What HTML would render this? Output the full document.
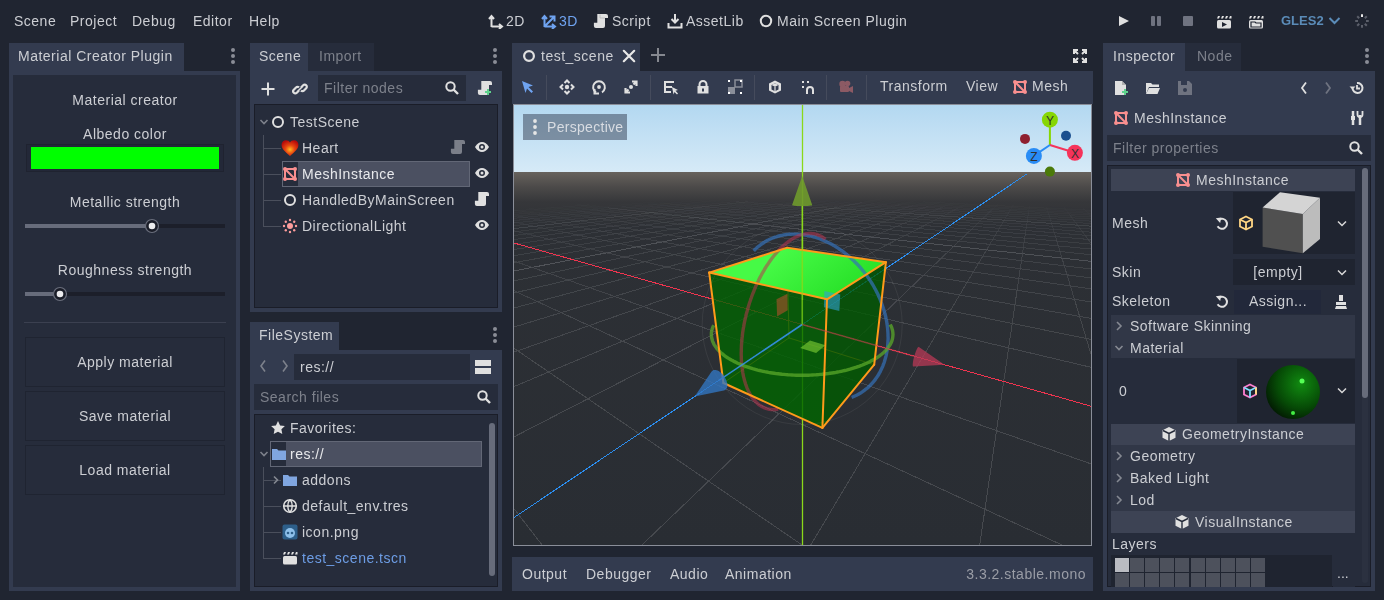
<!DOCTYPE html>
<html><head><meta charset="utf-8"><style>
html,body{margin:0;padding:0;}
body{width:1384px;height:600px;background:#202531;position:relative;overflow:hidden;font-family:"Liberation Sans",sans-serif;font-size:14px;}
body>div,body>span,body>svg{position:absolute;}
.t{position:absolute;white-space:pre;line-height:16px;font-size:14px;will-change:transform;}
</style></head><body>
<span class="t" style="left:14px;top:13px;color:#ccced3;letter-spacing:0.5px;font-weight:normal;">Scene</span><span class="t" style="left:70px;top:13px;color:#ccced3;letter-spacing:0.5px;font-weight:normal;">Project</span><span class="t" style="left:132px;top:13px;color:#ccced3;letter-spacing:0.5px;font-weight:normal;">Debug</span><span class="t" style="left:193px;top:13px;color:#ccced3;letter-spacing:0.5px;font-weight:normal;">Editor</span><span class="t" style="left:249px;top:13px;color:#ccced3;letter-spacing:0.5px;font-weight:normal;">Help</span><svg style="left:488px;top:13px;" width="16" height="16" viewBox="0 0 16 16"><path d="M3.5 14V3.5M1 6l2.5-3 2.5 3M3.5 13.5H14M11 11l3 2.5-3 2.5" fill="none" stroke="#e0e0e0" stroke-width="2"/></svg><span class="t" style="left:506px;top:13px;color:#ccced3;letter-spacing:0.5px;font-weight:normal;">2D</span><svg style="left:541px;top:13px;" width="16" height="16" viewBox="0 0 16 16"><path d="M3.5 14V3.5M1 6l2.5-3 2.5 3M3.5 13.5H14M11 11l3 2.5-3 2.5M4 13L13 4M8.5 3.5h5v5" fill="none" stroke="#6fa3f0" stroke-width="2"/></svg><span class="t" style="left:559px;top:13px;color:#6fa3f0;letter-spacing:0.5px;font-weight:normal;">3D</span><svg style="left:592px;top:13px;" width="16" height="16" viewBox="0 0 16 16"><path d="M5.3 1H14a2 2 0 0 1 2 2V5H13V13a2 2 0 0 1-2 2H3.9a2 2 0 0 1-2-2V9.8H5.3z" fill="#e0e0e0"/><path d="M8 1.5V5H13" stroke="#b8b8b8" stroke-width="0.8" fill="none"/></svg><span class="t" style="left:612px;top:13px;color:#ccced3;letter-spacing:0.5px;font-weight:normal;">Script</span><svg style="left:667px;top:13px;" width="16" height="16" viewBox="0 0 16 16"><path d="M8 1v8M4.5 6L8 9.5 11.5 6M1.5 10v4.5h13V10" fill="none" stroke="#e0e0e0" stroke-width="2"/></svg><span class="t" style="left:686px;top:13px;color:#ccced3;letter-spacing:0.5px;font-weight:normal;">AssetLib</span><svg style="left:759px;top:14px;" width="14" height="14" viewBox="0 0 14 14"><circle cx="7" cy="7" r="5.2" fill="none" stroke="#e0e0e0" stroke-width="2"/></svg><span class="t" style="left:777px;top:13px;color:#ccced3;letter-spacing:0.5px;font-weight:normal;">Main Screen Plugin</span><svg style="left:1116px;top:13px;" width="16" height="16" viewBox="0 0 16 16"><path d="M3 3l10 5-10 5z" fill="#e0e0e0"/></svg><svg style="left:1148px;top:13px;" width="16" height="16" viewBox="0 0 16 16"><rect x="3" y="3" width="4" height="10" rx="1" fill="#6f7380"/><rect x="9" y="3" width="4" height="10" rx="1" fill="#6f7380"/></svg><svg style="left:1180px;top:13px;" width="16" height="16" viewBox="0 0 16 16"><rect x="3" y="3" width="10" height="10" rx="1" fill="#6f7380"/></svg><svg style="left:1216px;top:14px;" width="16" height="16" viewBox="0 0 16 16"><rect x="1" y="6" width="14" height="8.5" rx="1.5" fill="#e0e0e0"/><g fill="#e0e0e0"><path d="M2 2h2l-1 2.5H1z"/><path d="M6 2h2l-1 2.5H5z"/><path d="M10 2h2l-1 2.5H9z"/><path d="M14 2h1.5v2.5H13z"/></g><path d="M6 8l5 2.5-5 2.5z" fill="#202531"/></svg><svg style="left:1248px;top:14px;" width="16" height="16" viewBox="0 0 16 16"><rect x="1" y="6" width="14" height="8.5" rx="1.5" fill="#e0e0e0"/><g fill="#e0e0e0"><path d="M2 2h2l-1 2.5H1z"/><path d="M6 2h2l-1 2.5H5z"/><path d="M10 2h2l-1 2.5H9z"/><path d="M14 2h1.5v2.5H13z"/></g><path d="M3 8h4l1 1h5v4H3z" fill="none" stroke="#202531" stroke-width="1.2"/></svg><span class="t" style="left:1281px;top:13px;color:#5b8cb8;letter-spacing:0px;font-weight:bold;font-size:13px;">GLES2</span><svg style="left:1328px;top:15px;" width="14" height="12" viewBox="0 0 14 12"><path d="M1.5 3l5 5 5-5" fill="none" stroke="#5b8cb8" stroke-width="2"/></svg><svg style="left:1354px;top:13px;" width="16" height="16" viewBox="0 0 16 16"><line x1="8.0" y1="4.0" x2="8.0" y2="1.2" stroke="#e8e8e8" stroke-width="2"/><line x1="10.8" y1="5.2" x2="12.8" y2="3.2" stroke="#5b5f6a" stroke-width="2"/><line x1="12.0" y1="8.0" x2="14.8" y2="8.0" stroke="#5b5f6a" stroke-width="2"/><line x1="10.8" y1="10.8" x2="12.8" y2="12.8" stroke="#5b5f6a" stroke-width="2"/><line x1="8.0" y1="12.0" x2="8.0" y2="14.8" stroke="#5b5f6a" stroke-width="2"/><line x1="5.2" y1="10.8" x2="3.2" y2="12.8" stroke="#5b5f6a" stroke-width="2"/><line x1="4.0" y1="8.0" x2="1.2" y2="8.0" stroke="#5b5f6a" stroke-width="2"/><line x1="5.2" y1="5.2" x2="3.2" y2="3.2" stroke="#5b5f6a" stroke-width="2"/></svg><div style="left:9px;top:43px;width:175px;height:28px;background:#333b4f;"></div><span class="t" style="left:18px;top:48px;color:#ccced3;letter-spacing:0.5px;font-weight:normal;">Material Creator Plugin</span><svg style="left:230px;top:47px;" width="6" height="18" viewBox="0 0 6 18"><circle cx="3" cy="3" r="2" fill="#8a8d96"/><circle cx="3" cy="9" r="2" fill="#8a8d96"/><circle cx="3" cy="15" r="2" fill="#8a8d96"/></svg><div style="left:9px;top:71px;width:231px;height:520px;background:#333b4f;"></div><div style="left:13px;top:75px;width:223px;height:512px;background:#262c3b;"></div><span class="t" style="left:-175px;width:600px;text-align:center;top:92px;color:#ccced3;letter-spacing:0.5px;">Material creator</span><span class="t" style="left:-175px;width:600px;text-align:center;top:126px;color:#ccced3;letter-spacing:0.5px;">Albedo color</span><div style="left:26px;top:144px;width:196px;height:26px;background:#232838;border:1px solid #1f2330;"></div><div style="left:31px;top:147px;width:188px;height:22px;background:#00ff00;"></div><span class="t" style="left:-175px;width:600px;text-align:center;top:194px;color:#ccced3;letter-spacing:0.5px;">Metallic strength</span><div style="left:25px;top:224px;width:200px;height:4px;background:#1c1f2a;"></div><div style="left:25px;top:224px;width:127px;height:4px;background:#676c7b;"></div><svg style="left:144px;top:218px;" width="16" height="16" viewBox="0 0 16 16"><circle cx="8" cy="8" r="6.5" fill="#1a1d28" stroke="#6b6f7d" stroke-width="1.2"/><circle cx="8" cy="8" r="3.3" fill="#ececee"/></svg><span class="t" style="left:-175px;width:600px;text-align:center;top:262px;color:#ccced3;letter-spacing:0.5px;">Roughness strength</span><div style="left:25px;top:292px;width:200px;height:4px;background:#1c1f2a;"></div><div style="left:25px;top:292px;width:35px;height:4px;background:#676c7b;"></div><svg style="left:52px;top:286px;" width="16" height="16" viewBox="0 0 16 16"><circle cx="8" cy="8" r="6.5" fill="#1a1d28" stroke="#6b6f7d" stroke-width="1.2"/><circle cx="8" cy="8" r="3.3" fill="#ececee"/></svg><div style="left:24px;top:322px;width:202px;height:1px;background:#3b4050;"></div><div style="left:25px;top:337px;width:198px;height:48px;background:#262c3b;border:1px solid #1f2431;"></div><span class="t" style="left:-175px;width:600px;text-align:center;top:354px;color:#ccced3;letter-spacing:0.5px;">Apply material</span><div style="left:25px;top:391px;width:198px;height:48px;background:#262c3b;border:1px solid #1f2431;"></div><span class="t" style="left:-175px;width:600px;text-align:center;top:408px;color:#ccced3;letter-spacing:0.5px;">Save material</span><div style="left:25px;top:445px;width:198px;height:48px;background:#262c3b;border:1px solid #1f2431;"></div><span class="t" style="left:-175px;width:600px;text-align:center;top:462px;color:#ccced3;letter-spacing:0.5px;">Load material</span><div style="left:250px;top:43px;width:58px;height:28px;background:#333b4f;"></div><span class="t" style="left:259px;top:48px;color:#ccced3;letter-spacing:0.5px;font-weight:normal;">Scene</span><div style="left:308px;top:43px;width:66px;height:28px;background:#262c3b;"></div><span class="t" style="left:319px;top:48px;color:#7d818b;letter-spacing:0.5px;font-weight:normal;">Import</span><svg style="left:492px;top:47px;" width="6" height="18" viewBox="0 0 6 18"><circle cx="3" cy="3" r="2" fill="#8a8d96"/><circle cx="3" cy="9" r="2" fill="#8a8d96"/><circle cx="3" cy="15" r="2" fill="#8a8d96"/></svg><div style="left:250px;top:71px;width:252px;height:241px;background:#333b4f;"></div><svg style="left:260px;top:81px;" width="16" height="16" viewBox="0 0 16 16"><path d="M8 1.5v13M1.5 8h13" stroke="#e0e0e0" stroke-width="2"/></svg><svg style="left:292px;top:81px;" width="16" height="16" viewBox="0 0 16 16"><g fill="none" stroke="#e0e0e0" stroke-width="2.2"><path d="M7 9.5l-2.2 2.2a2 2 0 0 1-3-3L4 6.5a2 2 0 0 1 3 0"/><path d="M9 6.5l2.2-2.2a2 2 0 0 1 3 3L12 9.5a2 2 0 0 1-3 0"/><path d="M6 10l4-4" stroke-width="1.6"/></g></svg><div style="left:318px;top:75px;width:148px;height:26px;background:#262c3b;"></div><span class="t" style="left:324px;top:80px;color:#7d818b;letter-spacing:0.5px;font-weight:normal;">Filter nodes</span><svg style="left:444px;top:80px;" width="16" height="16" viewBox="0 0 16 16"><circle cx="6.5" cy="6.5" r="4.2" fill="none" stroke="#e0e0e0" stroke-width="2"/><path d="M9.5 9.5l4.5 4.5" stroke="#e0e0e0" stroke-width="2.4"/></svg><svg style="left:476px;top:80px;" width="16" height="16" viewBox="0 0 16 16"><path d="M5.3 1H14a2 2 0 0 1 2 2V5H13V13a2 2 0 0 1-2 2H3.9a2 2 0 0 1-2-2V9.8H5.3z" fill="#e0e0e0"/><path d="M12 9v6M9 12h6" stroke="#5fd38d" stroke-width="2"/></svg><div style="left:254px;top:104px;width:242px;height:202px;background:#262c3b;border:1px solid #1a1d28;"></div><div style="left:263px;top:135px;width:1px;height:92px;background:#4a4f5c;"></div><div style="left:264px;top:148px;width:17px;height:1px;background:#4a4f5c;"></div><div style="left:264px;top:174px;width:17px;height:1px;background:#4a4f5c;"></div><div style="left:264px;top:200px;width:17px;height:1px;background:#4a4f5c;"></div><div style="left:264px;top:226px;width:17px;height:1px;background:#4a4f5c;"></div><svg style="left:259px;top:117px;" width="10" height="10" viewBox="0 0 10 10"><path d="M1.5 3l3.5 3.5 3.5-3.5" fill="none" stroke="#7d818b" stroke-width="1.6"/></svg><svg style="left:271px;top:115px;" width="14" height="14" viewBox="0 0 14 14"><circle cx="7" cy="7" r="5" fill="none" stroke="#e0e0e0" stroke-width="2"/></svg><span class="t" style="left:290px;top:114px;color:#ccced3;letter-spacing:0.5px;font-weight:normal;">TestScene</span><svg style="left:281px;top:139px;" width="18" height="18" viewBox="0 0 18 18"><defs><radialGradient id="hg" cx="0.5" cy="0.6" r="0.6"><stop offset="0" stop-color="#ffb820"/><stop offset="0.45" stop-color="#e84810"/><stop offset="1" stop-color="#b80a0a"/></radialGradient></defs><path d="M8 15C3 11 .5 8.5.5 5.2.5 2.8 2.3 1 4.5 1 6 1 7.3 1.8 8 3 8.7 1.8 10 1 11.5 1c2.2 0 4 1.8 4 4.2 0 3.3-2.5 5.8-7.5 9.8z" fill="url(#hg)" transform="scale(1.125)"/></svg><span class="t" style="left:302px;top:140px;color:#ccced3;letter-spacing:0.5px;font-weight:normal;">Heart</span><svg style="left:449px;top:139px;" width="16" height="16" viewBox="0 0 16 16"><path d="M5.3 1H14a2 2 0 0 1 2 2V5H13V13a2 2 0 0 1-2 2H3.9a2 2 0 0 1-2-2V9.8H5.3z" fill="#7b7f89"/></svg><svg style="left:474px;top:139px;" width="16" height="16" viewBox="0 0 16 16"><path d="M1 8c2-3.5 4.5-5 7-5s5 1.5 7 5c-2 3.5-4.5 5-7 5s-5-1.5-7-5z" fill="#e0e0e0"/><circle cx="8" cy="8" r="3" fill="#262c3b"/><circle cx="8" cy="8" r="1.5" fill="#e0e0e0"/></svg><div style="left:282px;top:161px;width:186px;height:24px;background:#4b5061;border:1px solid #626776;"></div><div style="left:283px;top:162px;width:15px;height:24px;background:#262c3b;"></div><svg style="left:282px;top:166px;" width="16" height="16" viewBox="0 0 16 16"><g fill="none" stroke="#f98f8f" stroke-width="2"><rect x="3" y="3" width="10" height="10"/><path d="M3 3l10 10"/></g><g fill="#f98f8f"><circle cx="3" cy="3" r="2"/><circle cx="13" cy="3" r="2"/><circle cx="3" cy="13" r="2"/><circle cx="13" cy="13" r="2"/></g></svg><span class="t" style="left:302px;top:166px;color:#e8e9ec;letter-spacing:0.5px;font-weight:normal;">MeshInstance</span><svg style="left:474px;top:165px;" width="16" height="16" viewBox="0 0 16 16"><path d="M1 8c2-3.5 4.5-5 7-5s5 1.5 7 5c-2 3.5-4.5 5-7 5s-5-1.5-7-5z" fill="#e0e0e0"/><circle cx="8" cy="8" r="3" fill="#262c3b"/><circle cx="8" cy="8" r="1.5" fill="#e0e0e0"/></svg><svg style="left:283px;top:193px;" width="14" height="14" viewBox="0 0 14 14"><circle cx="7" cy="7" r="5" fill="none" stroke="#e0e0e0" stroke-width="2"/></svg><span class="t" style="left:302px;top:192px;color:#ccced3;letter-spacing:0.5px;font-weight:normal;">HandledByMainScreen</span><svg style="left:473px;top:191px;" width="16" height="16" viewBox="0 0 16 16"><path d="M5.3 1H14a2 2 0 0 1 2 2V5H13V13a2 2 0 0 1-2 2H3.9a2 2 0 0 1-2-2V9.8H5.3z" fill="#e0e0e0"/></svg><svg style="left:282px;top:218px;" width="16" height="16" viewBox="0 0 16 16"><circle cx="8" cy="8" r="3" fill="#fc9c9c"/><circle cx="14.0" cy="8.0" r="1.2" fill="#fc9c9c"/><circle cx="12.2" cy="12.2" r="1.2" fill="#fc9c9c"/><circle cx="8.0" cy="14.0" r="1.2" fill="#fc9c9c"/><circle cx="3.8" cy="12.2" r="1.2" fill="#fc9c9c"/><circle cx="2.0" cy="8.0" r="1.2" fill="#fc9c9c"/><circle cx="3.8" cy="3.8" r="1.2" fill="#fc9c9c"/><circle cx="8.0" cy="2.0" r="1.2" fill="#fc9c9c"/><circle cx="12.2" cy="3.8" r="1.2" fill="#fc9c9c"/></svg><span class="t" style="left:302px;top:218px;color:#ccced3;letter-spacing:0.5px;font-weight:normal;">DirectionalLight</span><svg style="left:474px;top:217px;" width="16" height="16" viewBox="0 0 16 16"><path d="M1 8c2-3.5 4.5-5 7-5s5 1.5 7 5c-2 3.5-4.5 5-7 5s-5-1.5-7-5z" fill="#e0e0e0"/><circle cx="8" cy="8" r="3" fill="#262c3b"/><circle cx="8" cy="8" r="1.5" fill="#e0e0e0"/></svg><div style="left:250px;top:322px;width:89px;height:28px;background:#333b4f;"></div><span class="t" style="left:259px;top:327px;color:#ccced3;letter-spacing:0.5px;font-weight:normal;">FileSystem</span><svg style="left:492px;top:326px;" width="6" height="18" viewBox="0 0 6 18"><circle cx="3" cy="3" r="2" fill="#8a8d96"/><circle cx="3" cy="9" r="2" fill="#8a8d96"/><circle cx="3" cy="15" r="2" fill="#8a8d96"/></svg><div style="left:250px;top:350px;width:252px;height:241px;background:#333b4f;"></div><svg style="left:258px;top:358px;" width="10" height="16" viewBox="0 0 10 16"><path d="M7 2.5L3 8l4 5.5" fill="none" stroke="#7d818b" stroke-width="1.6"/></svg><svg style="left:280px;top:358px;" width="10" height="16" viewBox="0 0 10 16"><path d="M3 2.5L7 8l-4 5.5" fill="none" stroke="#7d818b" stroke-width="1.6"/></svg><div style="left:294px;top:354px;width:176px;height:26px;background:#262c3b;"></div><span class="t" style="left:300px;top:359px;color:#ccced3;letter-spacing:0.5px;font-weight:normal;">res://</span><svg style="left:474px;top:358px;" width="18" height="18" viewBox="0 0 18 18"><rect x="1" y="2" width="16" height="6" fill="#e0e0e0"/><rect x="1" y="10" width="16" height="6" fill="#e0e0e0"/></svg><div style="left:254px;top:384px;width:244px;height:26px;background:#262c3b;"></div><span class="t" style="left:260px;top:389px;color:#7d818b;letter-spacing:0.5px;font-weight:normal;">Search files</span><svg style="left:476px;top:389px;" width="16" height="16" viewBox="0 0 16 16"><circle cx="6.5" cy="6.5" r="4.2" fill="none" stroke="#e0e0e0" stroke-width="2"/><path d="M9.5 9.5l4.5 4.5" stroke="#e0e0e0" stroke-width="2.4"/></svg><div style="left:254px;top:414px;width:242px;height:171px;background:#262c3b;border:1px solid #1a1d28;"></div><div style="left:489px;top:423px;width:6px;height:153px;background:#676c7b;border-radius:3px;"></div><svg style="left:270px;top:420px;" width="16" height="16" viewBox="0 0 16 16"><path d="M8 1l2.1 4.4 4.8.6-3.5 3.3.9 4.7L8 11.7 3.7 14l.9-4.7L1.1 6l4.8-.6z" fill="#e0e0e0"/></svg><span class="t" style="left:290px;top:420px;color:#ccced3;letter-spacing:0.5px;font-weight:normal;">Favorites:</span><div style="left:270px;top:441px;width:210px;height:24px;background:#4b5061;border:1px solid #626776;"></div><div style="left:271px;top:442px;width:15px;height:24px;background:#262c3b;"></div><svg style="left:271px;top:446px;" width="16" height="16" viewBox="0 0 16 16"><path d="M1 3h5l1.5 1.5H15V14H1z" fill="#80a6e0"/></svg><span class="t" style="left:290px;top:446px;color:#e8e9ec;letter-spacing:0.5px;font-weight:normal;">res://</span><svg style="left:259px;top:449px;" width="10" height="10" viewBox="0 0 10 10"><path d="M1.5 3l3.5 3.5 3.5-3.5" fill="none" stroke="#7d818b" stroke-width="1.6"/></svg><div style="left:263px;top:467px;width:1px;height:92px;background:#4a4f5c;"></div><div style="left:264px;top:480px;width:17px;height:1px;background:#4a4f5c;"></div><div style="left:264px;top:506px;width:17px;height:1px;background:#4a4f5c;"></div><div style="left:264px;top:532px;width:17px;height:1px;background:#4a4f5c;"></div><div style="left:264px;top:558px;width:17px;height:1px;background:#4a4f5c;"></div><svg style="left:272px;top:475px;" width="8" height="10" viewBox="0 0 8 10"><path d="M2 1.5l3.5 3.5-3.5 3.5" fill="none" stroke="#858992" stroke-width="1.6"/></svg><svg style="left:282px;top:472px;" width="16" height="16" viewBox="0 0 16 16"><path d="M1 3h5l1.5 1.5H15V14H1z" fill="#80a6e0"/></svg><span class="t" style="left:302px;top:472px;color:#ccced3;letter-spacing:0.5px;font-weight:normal;">addons</span><svg style="left:282px;top:498px;" width="16" height="16" viewBox="0 0 16 16"><circle cx="8" cy="8" r="6.3" fill="none" stroke="#e0e0e0" stroke-width="1.6"/><path d="M1.5 8h13M8 1.5c-3 3.5-3 9.5 0 13M8 1.5c3 3.5 3 9.5 0 13" fill="none" stroke="#e0e0e0" stroke-width="1.4"/></svg><span class="t" style="left:302px;top:498px;color:#ccced3;letter-spacing:0.5px;font-weight:normal;">default_env.tres</span><svg style="left:282px;top:524px;" width="16" height="16" viewBox="0 0 16 16"><rect x="0.5" y="0.5" width="15" height="15" rx="2" fill="#2d5f8a"/><circle cx="8" cy="9" r="5" fill="#8ec0ea"/><circle cx="6" cy="9" r="1.3" fill="#2d5f8a"/><circle cx="10" cy="9" r="1.3" fill="#2d5f8a"/></svg><span class="t" style="left:302px;top:524px;color:#ccced3;letter-spacing:0.5px;font-weight:normal;">icon.png</span><svg style="left:282px;top:550px;" width="16" height="16" viewBox="0 0 16 16"><rect x="1" y="6" width="14" height="8.5" rx="1.5" fill="#e0e0e0"/><g fill="#e0e0e0"><path d="M2 2h2l-1 2.5H1z"/><path d="M6 2h2l-1 2.5H5z"/><path d="M10 2h2l-1 2.5H9z"/><path d="M14 2h1.5v2.5H13z"/></g></svg><span class="t" style="left:302px;top:550px;color:#6d9de5;letter-spacing:0.5px;font-weight:normal;">test_scene.tscn</span><div style="left:512px;top:43px;width:128px;height:28px;background:#333b4f;"></div><svg style="left:522px;top:49px;" width="14" height="14" viewBox="0 0 14 14"><circle cx="7" cy="7" r="4.9" fill="none" stroke="#e0e0e0" stroke-width="2.2"/></svg><span class="t" style="left:541px;top:48px;color:#ccced3;letter-spacing:0.5px;font-weight:normal;">test_scene</span><svg style="left:622px;top:49px;" width="14" height="14" viewBox="0 0 14 14"><path d="M1.8 1.8l10.4 10.4M12.2 1.8L1.8 12.2" stroke="#e8e8e8" stroke-width="2.2" stroke-linecap="round"/></svg><svg style="left:650px;top:47px;" width="16" height="16" viewBox="0 0 16 16"><path d="M8 1v14M1 8h14" stroke="#85888f" stroke-width="2"/></svg><svg style="left:1072px;top:48px;" width="16" height="16" viewBox="0 0 16 16"><g fill="none" stroke="#e0e0e0" stroke-width="2"><path d="M2 6V2h4M2 2l4 4M10 2h4v4M14 2l-4 4M2 10v4h4M2 14l4-4M14 10v4h-4M14 14l-4-4"/></g></svg><div style="left:512px;top:71px;width:581px;height:33px;background:#333b4f;"></div><svg style="left:519px;top:79px;" width="16" height="16" viewBox="0 0 16 16"><path d="M3 2l11 4.5-4.5 1.5L14 12.5 12.5 14 8 9.5 6.5 14z" fill="#6fa3f0"/></svg><div style="left:546px;top:75px;width:1px;height:25px;background:#454b5c;"></div><div style="left:650px;top:75px;width:1px;height:25px;background:#454b5c;"></div><div style="left:754px;top:75px;width:1px;height:25px;background:#454b5c;"></div><div style="left:826px;top:75px;width:1px;height:25px;background:#454b5c;"></div><div style="left:866px;top:75px;width:1px;height:25px;background:#454b5c;"></div><svg style="left:559px;top:79px;" width="16" height="16" viewBox="0 0 16 16"><path d="M5.5 4L8 1.5 10.5 4M5.5 12L8 14.5 10.5 12M4 5.5L1.5 8 4 10.5M12 5.5L14.5 8 12 10.5" fill="none" stroke="#e0e0e0" stroke-width="2"/><circle cx="8" cy="8" r="2.2" fill="#e0e0e0"/></svg><svg style="left:591px;top:79px;" width="16" height="16" viewBox="0 0 16 16"><path d="M5 13.3A5.9 5.9 0 1 1 11 13.3" fill="none" stroke="#e0e0e0" stroke-width="2"/><path d="M3.5 10v4.5H8" fill="none" stroke="#e0e0e0" stroke-width="2"/><circle cx="8" cy="8" r="1.9" fill="#e0e0e0"/></svg><svg style="left:623px;top:79px;" width="16" height="16" viewBox="0 0 16 16"><g fill="none" stroke="#e0e0e0" stroke-width="2.2"><path d="M9 2.5h4.5V7M13.5 2.5L10.5 5.5M7 13.5H2.5V9M2.5 13.5l3-3"/></g><circle cx="8" cy="8" r="2" fill="#e0e0e0"/></svg><svg style="left:663px;top:79px;" width="16" height="16" viewBox="0 0 16 16"><g fill="#e0e0e0"><rect x="1" y="2" width="2" height="12"/><rect x="1" y="2" width="10" height="2"/><rect x="1" y="7" width="8" height="2"/><rect x="1" y="12" width="7" height="2"/><path d="M9 8l6 3-2.5.8L15 14.5 14 15.5 11.5 13 10.5 15.5z"/></g></svg><svg style="left:695px;top:79px;" width="16" height="16" viewBox="0 0 16 16"><path d="M4.5 7V5.5a3.5 3.5 0 0 1 7 0V7" fill="none" stroke="#e0e0e0" stroke-width="2"/><rect x="2.5" y="7" width="11" height="7.5" fill="#e0e0e0"/><rect x="7" y="9.5" width="2" height="3" fill="#333b4f"/></svg><svg style="left:727px;top:79px;" width="16" height="16" viewBox="0 0 16 16"><rect x="1" y="8" width="7" height="7" fill="#8a8e99"/><rect x="8" y="1" width="7" height="7" fill="none" stroke="#8a8e99" stroke-width="1.5"/><g fill="#ffffff"><rect x="1" y="1" width="2" height="2"/><rect x="13" y="1" width="2" height="2"/><rect x="1" y="13" width="2" height="2"/><rect x="13" y="13" width="2" height="2"/></g></svg><svg style="left:767px;top:79px;" width="16" height="16" viewBox="0 0 16 16"><path d="M8 1.5l6 3v7l-6 3-6-3v-7z" fill="#e0e0e0"/><path d="M4.5 6L8 4.3 11.5 6v4.5L8 12.2 4.5 10.5z" fill="#333b4f"/><path d="M4.5 6L8 7.8 11.5 6 8 4.3z" fill="#e0e0e0"/><path d="M8 7.8v4.4" stroke="#e0e0e0" stroke-width="1.2"/></svg><svg style="left:800px;top:79px;" width="16" height="16" viewBox="0 0 16 16"><g fill="#e0e0e0"><rect x="2" y="2" width="2" height="2"/><rect x="7" y="2" width="2" height="2"/><rect x="2" y="7" width="2" height="2"/></g><path d="M7 15v-4a3 3 0 0 1 6 0v4" fill="none" stroke="#e0e0e0" stroke-width="2"/></svg><svg style="left:838px;top:79px;" width="16" height="16" viewBox="0 0 16 16"><g fill="#8c5a64"><circle cx="4.5" cy="5" r="3.2"/><circle cx="9.5" cy="4.5" r="2.8"/><rect x="2" y="7" width="9" height="6" rx="1"/><path d="M11 9l4-2v7l-4-2z"/></g></svg><span class="t" style="left:880px;top:78px;color:#ccced3;letter-spacing:0.5px;font-weight:normal;">Transform</span><span class="t" style="left:966px;top:78px;color:#ccced3;letter-spacing:0.5px;font-weight:normal;">View</span><svg style="left:1012px;top:79px;" width="16" height="16" viewBox="0 0 16 16"><g fill="none" stroke="#f98f8f" stroke-width="2"><rect x="3" y="3" width="10" height="10"/><path d="M3 3l10 10"/></g><g fill="#f98f8f"><circle cx="3" cy="3" r="2"/><circle cx="13" cy="3" r="2"/><circle cx="3" cy="13" r="2"/><circle cx="13" cy="13" r="2"/></g></svg><span class="t" style="left:1032px;top:78px;color:#ccced3;letter-spacing:0.5px;font-weight:normal;">Mesh</span><div style="left:513px;top:104px;width:579px;height:442px;background:#8a8e99;"></div><svg style="left:514px;top:105px;" width="577" height="440" viewBox="514 105 577 440"><defs><linearGradient id="sky" x1="0" y1="0" x2="0" y2="1"><stop offset="0" stop-color="#b3d8f1"/><stop offset="1" stop-color="#d6eaf7"/></linearGradient><linearGradient id="gnd" x1="0" y1="172" x2="0" y2="545" gradientUnits="userSpaceOnUse"><stop offset="0" stop-color="#67625d"/><stop offset="0.04" stop-color="#4c4a49"/><stop offset="0.08" stop-color="#36373a"/><stop offset="0.15" stop-color="#2d3035"/><stop offset="1" stop-color="#292d33"/></linearGradient><clipPath id="vpc"><rect x="514" y="105" width="577" height="440"/></clipPath></defs><rect x="514" y="105" width="577" height="67" fill="url(#sky)"/><rect x="514" y="172" width="577" height="373" fill="url(#gnd)"/><g shape-rendering="crispEdges"><line x1="982.5" y1="203.7" x2="1049.4" y2="206.9" stroke="#46494e" stroke-width="1" stroke-opacity="0.03"/><line x1="1049.4" y1="206.9" x2="1129.9" y2="210.8" stroke="#46494e" stroke-width="1" stroke-opacity="0.02"/><line x1="588.8" y1="204.9" x2="520.0" y2="210.5" stroke="#5d6065" stroke-width="1" stroke-opacity="0.05"/><line x1="520.0" y1="210.5" x2="426.2" y2="218.2" stroke="#5d6065" stroke-width="1" stroke-opacity="0.10"/><line x1="922.6" y1="201.9" x2="980.8" y2="204.8" stroke="#5d6065" stroke-width="1" stroke-opacity="0.05"/><line x1="980.8" y1="204.8" x2="1050.0" y2="208.3" stroke="#5d6065" stroke-width="1" stroke-opacity="0.07"/><line x1="1050.0" y1="208.3" x2="1133.6" y2="212.4" stroke="#5d6065" stroke-width="1" stroke-opacity="0.06"/><line x1="596.0" y1="205.7" x2="526.6" y2="211.6" stroke="#46494e" stroke-width="1" stroke-opacity="0.09"/><line x1="526.6" y1="211.6" x2="431.4" y2="219.6" stroke="#46494e" stroke-width="1" stroke-opacity="0.14"/><line x1="868.5" y1="200.3" x2="919.2" y2="203.0" stroke="#46494e" stroke-width="1" stroke-opacity="0.05"/><line x1="919.2" y1="203.0" x2="979.0" y2="206.0" stroke="#46494e" stroke-width="1" stroke-opacity="0.09"/><line x1="979.0" y1="206.0" x2="1050.5" y2="209.7" stroke="#46494e" stroke-width="1" stroke-opacity="0.11"/><line x1="1050.5" y1="209.7" x2="1137.6" y2="214.2" stroke="#46494e" stroke-width="1" stroke-opacity="0.10"/><line x1="656.2" y1="201.9" x2="603.5" y2="206.5" stroke="#46494e" stroke-width="1" stroke-opacity="0.05"/><line x1="603.5" y1="206.5" x2="533.6" y2="212.7" stroke="#46494e" stroke-width="1" stroke-opacity="0.12"/><line x1="533.6" y1="212.7" x2="436.8" y2="221.2" stroke="#46494e" stroke-width="1" stroke-opacity="0.18"/><line x1="819.4" y1="198.9" x2="863.7" y2="201.3" stroke="#46494e" stroke-width="1" stroke-opacity="0.03"/><line x1="863.7" y1="201.3" x2="915.6" y2="204.0" stroke="#46494e" stroke-width="1" stroke-opacity="0.09"/><line x1="915.6" y1="204.0" x2="977.1" y2="207.3" stroke="#46494e" stroke-width="1" stroke-opacity="0.13"/><line x1="977.1" y1="207.3" x2="1051.1" y2="211.3" stroke="#46494e" stroke-width="1" stroke-opacity="0.15"/><line x1="1051.1" y1="211.3" x2="1141.9" y2="216.1" stroke="#46494e" stroke-width="1" stroke-opacity="0.14"/><line x1="664.1" y1="202.5" x2="611.3" y2="207.3" stroke="#46494e" stroke-width="1" stroke-opacity="0.08"/><line x1="611.3" y1="207.3" x2="540.9" y2="213.8" stroke="#46494e" stroke-width="1" stroke-opacity="0.16"/><line x1="540.9" y1="213.8" x2="442.6" y2="222.8" stroke="#46494e" stroke-width="1" stroke-opacity="0.22"/><line x1="813.4" y1="199.7" x2="858.6" y2="202.2" stroke="#46494e" stroke-width="1" stroke-opacity="0.06"/><line x1="858.6" y1="202.2" x2="911.8" y2="205.2" stroke="#46494e" stroke-width="1" stroke-opacity="0.13"/><line x1="911.8" y1="205.2" x2="975.0" y2="208.7" stroke="#46494e" stroke-width="1" stroke-opacity="0.17"/><line x1="975.0" y1="208.7" x2="1051.7" y2="212.9" stroke="#46494e" stroke-width="1" stroke-opacity="0.19"/><line x1="1051.7" y1="212.9" x2="1146.5" y2="218.2" stroke="#46494e" stroke-width="1" stroke-opacity="0.18"/><line x1="672.3" y1="203.2" x2="619.5" y2="208.2" stroke="#46494e" stroke-width="1" stroke-opacity="0.12"/><line x1="619.5" y1="208.2" x2="548.7" y2="215.0" stroke="#46494e" stroke-width="1" stroke-opacity="0.20"/><line x1="548.7" y1="215.0" x2="448.7" y2="224.5" stroke="#46494e" stroke-width="1" stroke-opacity="0.25"/><line x1="807.2" y1="200.6" x2="853.2" y2="203.3" stroke="#46494e" stroke-width="1" stroke-opacity="0.10"/><line x1="853.2" y1="203.3" x2="907.6" y2="206.4" stroke="#46494e" stroke-width="1" stroke-opacity="0.17"/><line x1="907.6" y1="206.4" x2="972.8" y2="210.2" stroke="#46494e" stroke-width="1" stroke-opacity="0.21"/><line x1="972.8" y1="210.2" x2="1052.4" y2="214.7" stroke="#46494e" stroke-width="1" stroke-opacity="0.23"/><line x1="1052.4" y1="214.7" x2="1151.6" y2="220.5" stroke="#46494e" stroke-width="1" stroke-opacity="0.22"/><line x1="721.5" y1="199.8" x2="680.8" y2="203.9" stroke="#46494e" stroke-width="1" stroke-opacity="0.05"/><line x1="680.8" y1="203.9" x2="628.1" y2="209.2" stroke="#46494e" stroke-width="1" stroke-opacity="0.15"/><line x1="628.1" y1="209.2" x2="556.8" y2="216.3" stroke="#46494e" stroke-width="1" stroke-opacity="0.23"/><line x1="556.8" y1="216.3" x2="455.3" y2="226.4" stroke="#46494e" stroke-width="1" stroke-opacity="0.29"/><line x1="760.4" y1="199.1" x2="800.5" y2="201.5" stroke="#46494e" stroke-width="1" stroke-opacity="0.04"/><line x1="800.5" y1="201.5" x2="847.5" y2="204.4" stroke="#46494e" stroke-width="1" stroke-opacity="0.13"/><line x1="847.5" y1="204.4" x2="903.3" y2="207.7" stroke="#46494e" stroke-width="1" stroke-opacity="0.20"/><line x1="903.3" y1="207.7" x2="970.5" y2="211.7" stroke="#46494e" stroke-width="1" stroke-opacity="0.25"/><line x1="970.5" y1="211.7" x2="1053.1" y2="216.7" stroke="#46494e" stroke-width="1" stroke-opacity="0.27"/><line x1="1053.1" y1="216.7" x2="1157.2" y2="223.0" stroke="#46494e" stroke-width="1" stroke-opacity="0.26"/><line x1="730.1" y1="200.4" x2="689.7" y2="204.6" stroke="#46494e" stroke-width="1" stroke-opacity="0.08"/><line x1="689.7" y1="204.6" x2="637.0" y2="210.1" stroke="#46494e" stroke-width="1" stroke-opacity="0.18"/><line x1="637.0" y1="210.1" x2="565.4" y2="217.6" stroke="#46494e" stroke-width="1" stroke-opacity="0.27"/><line x1="565.4" y1="217.6" x2="462.3" y2="228.4" stroke="#46494e" stroke-width="1" stroke-opacity="0.33"/><line x1="752.8" y1="200.0" x2="793.5" y2="202.5" stroke="#46494e" stroke-width="1" stroke-opacity="0.07"/><line x1="793.5" y1="202.5" x2="841.4" y2="205.5" stroke="#46494e" stroke-width="1" stroke-opacity="0.17"/><line x1="841.4" y1="205.5" x2="898.5" y2="209.1" stroke="#46494e" stroke-width="1" stroke-opacity="0.24"/><line x1="898.5" y1="209.1" x2="967.9" y2="213.5" stroke="#46494e" stroke-width="1" stroke-opacity="0.29"/><line x1="967.9" y1="213.5" x2="1053.9" y2="218.8" stroke="#46494e" stroke-width="1" stroke-opacity="0.31"/><line x1="1053.9" y1="218.8" x2="1163.4" y2="225.7" stroke="#46494e" stroke-width="1" stroke-opacity="0.30"/><line x1="739.0" y1="201.0" x2="699.0" y2="205.4" stroke="#46494e" stroke-width="1" stroke-opacity="0.11"/><line x1="699.0" y1="205.4" x2="646.5" y2="211.1" stroke="#46494e" stroke-width="1" stroke-opacity="0.22"/><line x1="646.5" y1="211.1" x2="574.5" y2="219.0" stroke="#46494e" stroke-width="1" stroke-opacity="0.30"/><line x1="574.5" y1="219.0" x2="469.8" y2="230.5" stroke="#46494e" stroke-width="1" stroke-opacity="0.37"/><line x1="744.8" y1="200.9" x2="786.1" y2="203.6" stroke="#46494e" stroke-width="1" stroke-opacity="0.10"/><line x1="786.1" y1="203.6" x2="834.9" y2="206.8" stroke="#46494e" stroke-width="1" stroke-opacity="0.20"/><line x1="834.9" y1="206.8" x2="893.5" y2="210.6" stroke="#46494e" stroke-width="1" stroke-opacity="0.28"/><line x1="893.5" y1="210.6" x2="965.2" y2="215.3" stroke="#46494e" stroke-width="1" stroke-opacity="0.33"/><line x1="965.2" y1="215.3" x2="1054.8" y2="221.2" stroke="#46494e" stroke-width="1" stroke-opacity="0.35"/><line x1="1054.8" y1="221.2" x2="1170.2" y2="228.7" stroke="#46494e" stroke-width="1" stroke-opacity="0.34"/><line x1="748.2" y1="201.6" x2="708.6" y2="206.2" stroke="#5d6065" stroke-width="1" stroke-opacity="0.14"/><line x1="708.6" y1="206.2" x2="656.3" y2="212.2" stroke="#5d6065" stroke-width="1" stroke-opacity="0.25"/><line x1="656.3" y1="212.2" x2="584.1" y2="220.5" stroke="#5d6065" stroke-width="1" stroke-opacity="0.34"/><line x1="584.1" y1="220.5" x2="477.9" y2="232.8" stroke="#5d6065" stroke-width="1" stroke-opacity="0.41"/><line x1="736.3" y1="201.8" x2="778.2" y2="204.7" stroke="#5d6065" stroke-width="1" stroke-opacity="0.13"/><line x1="778.2" y1="204.7" x2="827.9" y2="208.1" stroke="#5d6065" stroke-width="1" stroke-opacity="0.23"/><line x1="827.9" y1="208.1" x2="888.0" y2="212.2" stroke="#5d6065" stroke-width="1" stroke-opacity="0.31"/><line x1="888.0" y1="212.2" x2="962.2" y2="217.3" stroke="#5d6065" stroke-width="1" stroke-opacity="0.37"/><line x1="962.2" y1="217.3" x2="1055.8" y2="223.7" stroke="#5d6065" stroke-width="1" stroke-opacity="0.39"/><line x1="1055.8" y1="223.7" x2="1177.8" y2="232.1" stroke="#5d6065" stroke-width="1" stroke-opacity="0.38"/><line x1="788.3" y1="198.5" x2="757.8" y2="202.2" stroke="#46494e" stroke-width="1" stroke-opacity="0.04"/><line x1="757.8" y1="202.2" x2="718.7" y2="207.0" stroke="#46494e" stroke-width="1" stroke-opacity="0.16"/><line x1="718.7" y1="207.0" x2="666.7" y2="213.3" stroke="#46494e" stroke-width="1" stroke-opacity="0.28"/><line x1="666.7" y1="213.3" x2="594.3" y2="222.1" stroke="#46494e" stroke-width="1" stroke-opacity="0.37"/><line x1="594.3" y1="222.1" x2="486.5" y2="235.2" stroke="#46494e" stroke-width="1" stroke-opacity="0.44"/><line x1="691.2" y1="200.2" x2="727.3" y2="202.8" stroke="#46494e" stroke-width="1" stroke-opacity="0.05"/><line x1="727.3" y1="202.8" x2="769.7" y2="205.9" stroke="#46494e" stroke-width="1" stroke-opacity="0.16"/><line x1="769.7" y1="205.9" x2="820.4" y2="209.5" stroke="#46494e" stroke-width="1" stroke-opacity="0.27"/><line x1="820.4" y1="209.5" x2="882.2" y2="214.0" stroke="#46494e" stroke-width="1" stroke-opacity="0.35"/><line x1="882.2" y1="214.0" x2="958.9" y2="219.5" stroke="#46494e" stroke-width="1" stroke-opacity="0.40"/><line x1="958.9" y1="219.5" x2="1056.8" y2="226.6" stroke="#46494e" stroke-width="1" stroke-opacity="0.43"/><line x1="1056.8" y1="226.6" x2="1186.2" y2="235.9" stroke="#46494e" stroke-width="1" stroke-opacity="0.42"/><line x1="797.7" y1="199.1" x2="767.8" y2="202.9" stroke="#46494e" stroke-width="1" stroke-opacity="0.06"/><line x1="767.8" y1="202.9" x2="729.2" y2="207.9" stroke="#46494e" stroke-width="1" stroke-opacity="0.19"/><line x1="729.2" y1="207.9" x2="677.7" y2="214.5" stroke="#46494e" stroke-width="1" stroke-opacity="0.31"/><line x1="677.7" y1="214.5" x2="605.2" y2="223.8" stroke="#46494e" stroke-width="1" stroke-opacity="0.41"/><line x1="605.2" y1="223.8" x2="495.9" y2="237.9" stroke="#46494e" stroke-width="1" stroke-opacity="0.48"/><line x1="681.4" y1="201.2" x2="717.7" y2="203.9" stroke="#46494e" stroke-width="1" stroke-opacity="0.07"/><line x1="717.7" y1="203.9" x2="760.7" y2="207.2" stroke="#46494e" stroke-width="1" stroke-opacity="0.19"/><line x1="760.7" y1="207.2" x2="812.4" y2="211.1" stroke="#46494e" stroke-width="1" stroke-opacity="0.30"/><line x1="812.4" y1="211.1" x2="875.8" y2="215.9" stroke="#46494e" stroke-width="1" stroke-opacity="0.38"/><line x1="875.8" y1="215.9" x2="955.3" y2="221.9" stroke="#46494e" stroke-width="1" stroke-opacity="0.44"/><line x1="955.3" y1="221.9" x2="1058.0" y2="229.7" stroke="#46494e" stroke-width="1" stroke-opacity="0.47"/><line x1="1058.0" y1="229.7" x2="1195.7" y2="240.1" stroke="#46494e" stroke-width="1" stroke-opacity="0.45"/><line x1="807.4" y1="199.6" x2="778.1" y2="203.6" stroke="#46494e" stroke-width="1" stroke-opacity="0.09"/><line x1="778.1" y1="203.6" x2="740.2" y2="208.8" stroke="#46494e" stroke-width="1" stroke-opacity="0.22"/><line x1="740.2" y1="208.8" x2="689.2" y2="215.7" stroke="#46494e" stroke-width="1" stroke-opacity="0.34"/><line x1="689.2" y1="215.7" x2="616.8" y2="225.6" stroke="#46494e" stroke-width="1" stroke-opacity="0.44"/><line x1="616.8" y1="225.6" x2="506.0" y2="240.7" stroke="#46494e" stroke-width="1" stroke-opacity="0.52"/><line x1="670.9" y1="202.1" x2="707.5" y2="205.0" stroke="#46494e" stroke-width="1" stroke-opacity="0.10"/><line x1="707.5" y1="205.0" x2="751.0" y2="208.5" stroke="#46494e" stroke-width="1" stroke-opacity="0.22"/><line x1="751.0" y1="208.5" x2="803.7" y2="212.7" stroke="#46494e" stroke-width="1" stroke-opacity="0.33"/><line x1="803.7" y1="212.7" x2="868.9" y2="217.9" stroke="#46494e" stroke-width="1" stroke-opacity="0.42"/><line x1="868.9" y1="217.9" x2="951.4" y2="224.5" stroke="#46494e" stroke-width="1" stroke-opacity="0.48"/><line x1="951.4" y1="224.5" x2="1059.3" y2="233.2" stroke="#46494e" stroke-width="1" stroke-opacity="0.51"/><line x1="1059.3" y1="233.2" x2="1206.6" y2="244.9" stroke="#46494e" stroke-width="1" stroke-opacity="0.49"/><line x1="817.5" y1="200.2" x2="788.9" y2="204.3" stroke="#46494e" stroke-width="1" stroke-opacity="0.11"/><line x1="788.9" y1="204.3" x2="751.8" y2="209.7" stroke="#46494e" stroke-width="1" stroke-opacity="0.24"/><line x1="751.8" y1="209.7" x2="701.4" y2="217.0" stroke="#46494e" stroke-width="1" stroke-opacity="0.37"/><line x1="701.4" y1="217.0" x2="629.1" y2="227.5" stroke="#46494e" stroke-width="1" stroke-opacity="0.47"/><line x1="629.1" y1="227.5" x2="517.0" y2="243.9" stroke="#46494e" stroke-width="1" stroke-opacity="0.55"/><line x1="517.0" y1="243.9" x2="319.2" y2="272.6" stroke="#46494e" stroke-width="1" stroke-opacity="0.60"/><line x1="659.8" y1="203.1" x2="696.6" y2="206.3" stroke="#46494e" stroke-width="1" stroke-opacity="0.12"/><line x1="696.6" y1="206.3" x2="740.7" y2="210.0" stroke="#46494e" stroke-width="1" stroke-opacity="0.25"/><line x1="740.7" y1="210.0" x2="794.4" y2="214.5" stroke="#46494e" stroke-width="1" stroke-opacity="0.36"/><line x1="794.4" y1="214.5" x2="861.3" y2="220.2" stroke="#46494e" stroke-width="1" stroke-opacity="0.46"/><line x1="861.3" y1="220.2" x2="947.1" y2="227.4" stroke="#46494e" stroke-width="1" stroke-opacity="0.52"/><line x1="947.1" y1="227.4" x2="1060.8" y2="237.1" stroke="#46494e" stroke-width="1" stroke-opacity="0.55"/><line x1="1060.8" y1="237.1" x2="1218.9" y2="250.4" stroke="#46494e" stroke-width="1" stroke-opacity="0.53"/><line x1="827.9" y1="200.7" x2="800.2" y2="205.1" stroke="#46494e" stroke-width="1" stroke-opacity="0.13"/><line x1="800.2" y1="205.1" x2="763.9" y2="210.7" stroke="#46494e" stroke-width="1" stroke-opacity="0.27"/><line x1="763.9" y1="210.7" x2="714.2" y2="218.4" stroke="#46494e" stroke-width="1" stroke-opacity="0.39"/><line x1="714.2" y1="218.4" x2="642.4" y2="229.6" stroke="#46494e" stroke-width="1" stroke-opacity="0.51"/><line x1="642.4" y1="229.6" x2="529.0" y2="247.2" stroke="#46494e" stroke-width="1" stroke-opacity="0.59"/><line x1="529.0" y1="247.2" x2="323.6" y2="279.2" stroke="#46494e" stroke-width="1" stroke-opacity="0.64"/><line x1="648.0" y1="204.2" x2="685.0" y2="207.5" stroke="#46494e" stroke-width="1" stroke-opacity="0.15"/><line x1="685.0" y1="207.5" x2="729.5" y2="211.5" stroke="#46494e" stroke-width="1" stroke-opacity="0.28"/><line x1="729.5" y1="211.5" x2="784.2" y2="216.5" stroke="#46494e" stroke-width="1" stroke-opacity="0.39"/><line x1="784.2" y1="216.5" x2="853.0" y2="222.6" stroke="#46494e" stroke-width="1" stroke-opacity="0.49"/><line x1="853.0" y1="222.6" x2="942.2" y2="230.7" stroke="#46494e" stroke-width="1" stroke-opacity="0.56"/><line x1="942.2" y1="230.7" x2="1062.4" y2="241.5" stroke="#46494e" stroke-width="1" stroke-opacity="0.59"/><line x1="1062.4" y1="241.5" x2="1233.2" y2="256.8" stroke="#46494e" stroke-width="1" stroke-opacity="0.57"/><line x1="838.8" y1="201.3" x2="811.9" y2="205.8" stroke="#46494e" stroke-width="1" stroke-opacity="0.15"/><line x1="811.9" y1="205.8" x2="776.6" y2="211.8" stroke="#46494e" stroke-width="1" stroke-opacity="0.29"/><line x1="776.6" y1="211.8" x2="727.9" y2="219.9" stroke="#46494e" stroke-width="1" stroke-opacity="0.42"/><line x1="727.9" y1="219.9" x2="656.6" y2="231.8" stroke="#46494e" stroke-width="1" stroke-opacity="0.54"/><line x1="656.6" y1="231.8" x2="542.1" y2="251.0" stroke="#46494e" stroke-width="1" stroke-opacity="0.63"/><line x1="542.1" y1="251.0" x2="328.5" y2="286.7" stroke="#46494e" stroke-width="1" stroke-opacity="0.68"/><line x1="604.4" y1="202.4" x2="635.5" y2="205.4" stroke="#46494e" stroke-width="1" stroke-opacity="0.03"/><line x1="635.5" y1="205.4" x2="672.5" y2="208.9" stroke="#46494e" stroke-width="1" stroke-opacity="0.17"/><line x1="672.5" y1="208.9" x2="717.5" y2="213.2" stroke="#46494e" stroke-width="1" stroke-opacity="0.30"/><line x1="717.5" y1="213.2" x2="773.2" y2="218.6" stroke="#46494e" stroke-width="1" stroke-opacity="0.42"/><line x1="773.2" y1="218.6" x2="843.9" y2="225.4" stroke="#46494e" stroke-width="1" stroke-opacity="0.52"/><line x1="843.9" y1="225.4" x2="936.9" y2="234.3" stroke="#46494e" stroke-width="1" stroke-opacity="0.59"/><line x1="936.9" y1="234.3" x2="1064.3" y2="246.5" stroke="#46494e" stroke-width="1" stroke-opacity="0.63"/><line x1="1064.3" y1="246.5" x2="1249.9" y2="264.2" stroke="#46494e" stroke-width="1" stroke-opacity="0.61"/><line x1="850.0" y1="202.0" x2="824.2" y2="206.6" stroke="#46494e" stroke-width="1" stroke-opacity="0.17"/><line x1="824.2" y1="206.6" x2="789.9" y2="212.8" stroke="#46494e" stroke-width="1" stroke-opacity="0.31"/><line x1="789.9" y1="212.8" x2="742.3" y2="221.4" stroke="#46494e" stroke-width="1" stroke-opacity="0.45"/><line x1="742.3" y1="221.4" x2="671.8" y2="234.2" stroke="#46494e" stroke-width="1" stroke-opacity="0.57"/><line x1="671.8" y1="234.2" x2="556.6" y2="255.0" stroke="#46494e" stroke-width="1" stroke-opacity="0.66"/><line x1="556.6" y1="255.0" x2="334.2" y2="295.3" stroke="#46494e" stroke-width="1" stroke-opacity="0.72"/><line x1="591.2" y1="203.5" x2="622.1" y2="206.6" stroke="#46494e" stroke-width="1" stroke-opacity="0.04"/><line x1="622.1" y1="206.6" x2="659.2" y2="210.4" stroke="#46494e" stroke-width="1" stroke-opacity="0.19"/><line x1="659.2" y1="210.4" x2="704.5" y2="215.1" stroke="#46494e" stroke-width="1" stroke-opacity="0.33"/><line x1="704.5" y1="215.1" x2="761.1" y2="220.9" stroke="#46494e" stroke-width="1" stroke-opacity="0.45"/><line x1="761.1" y1="220.9" x2="833.9" y2="228.3" stroke="#46494e" stroke-width="1" stroke-opacity="0.56"/><line x1="833.9" y1="228.3" x2="930.8" y2="238.3" stroke="#46494e" stroke-width="1" stroke-opacity="0.63"/><line x1="930.8" y1="238.3" x2="1066.5" y2="252.2" stroke="#46494e" stroke-width="1" stroke-opacity="0.66"/><line x1="1066.5" y1="252.2" x2="1269.7" y2="273.0" stroke="#46494e" stroke-width="1" stroke-opacity="0.65"/><line x1="881.0" y1="198.8" x2="861.7" y2="202.6" stroke="#5d6065" stroke-width="1" stroke-opacity="0.03"/><line x1="861.7" y1="202.6" x2="836.9" y2="207.5" stroke="#5d6065" stroke-width="1" stroke-opacity="0.18"/><line x1="836.9" y1="207.5" x2="803.9" y2="214.0" stroke="#5d6065" stroke-width="1" stroke-opacity="0.33"/><line x1="803.9" y1="214.0" x2="757.7" y2="223.1" stroke="#5d6065" stroke-width="1" stroke-opacity="0.47"/><line x1="757.7" y1="223.1" x2="688.2" y2="236.8" stroke="#5d6065" stroke-width="1" stroke-opacity="0.60"/><line x1="688.2" y1="236.8" x2="572.5" y2="259.5" stroke="#5d6065" stroke-width="1" stroke-opacity="0.70"/><line x1="572.5" y1="259.5" x2="340.7" y2="305.2" stroke="#5d6065" stroke-width="1" stroke-opacity="0.75"/><line x1="577.1" y1="204.6" x2="607.7" y2="207.9" stroke="#5d6065" stroke-width="1" stroke-opacity="0.06"/><line x1="607.7" y1="207.9" x2="644.8" y2="212.0" stroke="#5d6065" stroke-width="1" stroke-opacity="0.21"/><line x1="644.8" y1="212.0" x2="690.4" y2="217.1" stroke="#5d6065" stroke-width="1" stroke-opacity="0.35"/><line x1="690.4" y1="217.1" x2="747.9" y2="223.4" stroke="#5d6065" stroke-width="1" stroke-opacity="0.48"/><line x1="747.9" y1="223.4" x2="822.7" y2="231.7" stroke="#5d6065" stroke-width="1" stroke-opacity="0.59"/><line x1="822.7" y1="231.7" x2="924.0" y2="242.9" stroke="#5d6065" stroke-width="1" stroke-opacity="0.67"/><line x1="924.0" y1="242.9" x2="1069.0" y2="258.9" stroke="#5d6065" stroke-width="1" stroke-opacity="0.70"/><line x1="1069.0" y1="258.9" x2="1293.5" y2="283.6" stroke="#5d6065" stroke-width="1" stroke-opacity="0.68"/><line x1="892.1" y1="199.4" x2="873.9" y2="203.3" stroke="#46494e" stroke-width="1" stroke-opacity="0.05"/><line x1="873.9" y1="203.3" x2="850.3" y2="208.4" stroke="#46494e" stroke-width="1" stroke-opacity="0.20"/><line x1="850.3" y1="208.4" x2="818.7" y2="215.2" stroke="#46494e" stroke-width="1" stroke-opacity="0.35"/><line x1="818.7" y1="215.2" x2="774.0" y2="224.9" stroke="#46494e" stroke-width="1" stroke-opacity="0.49"/><line x1="774.0" y1="224.9" x2="706.0" y2="239.5" stroke="#46494e" stroke-width="1" stroke-opacity="0.62"/><line x1="706.0" y1="239.5" x2="590.2" y2="264.5" stroke="#46494e" stroke-width="1" stroke-opacity="0.73"/><line x1="590.2" y1="264.5" x2="348.3" y2="316.7" stroke="#46494e" stroke-width="1" stroke-opacity="0.79"/><line x1="562.1" y1="205.7" x2="592.4" y2="209.4" stroke="#46494e" stroke-width="1" stroke-opacity="0.08"/><line x1="592.4" y1="209.4" x2="629.2" y2="213.8" stroke="#46494e" stroke-width="1" stroke-opacity="0.23"/><line x1="629.2" y1="213.8" x2="675.0" y2="219.2" stroke="#46494e" stroke-width="1" stroke-opacity="0.37"/><line x1="675.0" y1="219.2" x2="733.3" y2="226.2" stroke="#46494e" stroke-width="1" stroke-opacity="0.50"/><line x1="733.3" y1="226.2" x2="810.2" y2="235.4" stroke="#46494e" stroke-width="1" stroke-opacity="0.62"/><line x1="810.2" y1="235.4" x2="916.3" y2="248.1" stroke="#46494e" stroke-width="1" stroke-opacity="0.71"/><line x1="916.3" y1="248.1" x2="1071.9" y2="266.7" stroke="#46494e" stroke-width="1" stroke-opacity="0.74"/><line x1="1071.9" y1="266.7" x2="1322.6" y2="296.6" stroke="#46494e" stroke-width="1" stroke-opacity="0.72"/><line x1="903.6" y1="199.9" x2="886.5" y2="204.0" stroke="#46494e" stroke-width="1" stroke-opacity="0.06"/><line x1="886.5" y1="204.0" x2="864.3" y2="209.3" stroke="#46494e" stroke-width="1" stroke-opacity="0.22"/><line x1="864.3" y1="209.3" x2="834.3" y2="216.5" stroke="#46494e" stroke-width="1" stroke-opacity="0.37"/><line x1="834.3" y1="216.5" x2="791.4" y2="226.7" stroke="#46494e" stroke-width="1" stroke-opacity="0.51"/><line x1="791.4" y1="226.7" x2="725.3" y2="242.5" stroke="#46494e" stroke-width="1" stroke-opacity="0.65"/><line x1="725.3" y1="242.5" x2="609.9" y2="270.1" stroke="#46494e" stroke-width="1" stroke-opacity="0.76"/><line x1="609.9" y1="270.1" x2="357.4" y2="330.5" stroke="#46494e" stroke-width="1" stroke-opacity="0.83"/><line x1="546.1" y1="207.0" x2="575.9" y2="210.9" stroke="#46494e" stroke-width="1" stroke-opacity="0.09"/><line x1="575.9" y1="210.9" x2="612.4" y2="215.6" stroke="#46494e" stroke-width="1" stroke-opacity="0.25"/><line x1="612.4" y1="215.6" x2="658.2" y2="221.6" stroke="#46494e" stroke-width="1" stroke-opacity="0.39"/><line x1="658.2" y1="221.6" x2="717.2" y2="229.3" stroke="#46494e" stroke-width="1" stroke-opacity="0.53"/><line x1="717.2" y1="229.3" x2="796.2" y2="239.6" stroke="#46494e" stroke-width="1" stroke-opacity="0.65"/><line x1="796.2" y1="239.6" x2="907.3" y2="254.0" stroke="#46494e" stroke-width="1" stroke-opacity="0.74"/><line x1="907.3" y1="254.0" x2="1075.4" y2="275.9" stroke="#46494e" stroke-width="1" stroke-opacity="0.78"/><line x1="1075.4" y1="275.9" x2="1359.2" y2="312.9" stroke="#46494e" stroke-width="1" stroke-opacity="0.76"/><line x1="915.6" y1="200.5" x2="899.7" y2="204.7" stroke="#46494e" stroke-width="1" stroke-opacity="0.07"/><line x1="899.7" y1="204.7" x2="879.0" y2="210.3" stroke="#46494e" stroke-width="1" stroke-opacity="0.23"/><line x1="879.0" y1="210.3" x2="850.7" y2="217.8" stroke="#46494e" stroke-width="1" stroke-opacity="0.38"/><line x1="850.7" y1="217.8" x2="810.0" y2="228.7" stroke="#46494e" stroke-width="1" stroke-opacity="0.53"/><line x1="810.0" y1="228.7" x2="746.3" y2="245.8" stroke="#46494e" stroke-width="1" stroke-opacity="0.67"/><line x1="746.3" y1="245.8" x2="632.0" y2="276.4" stroke="#46494e" stroke-width="1" stroke-opacity="0.79"/><line x1="632.0" y1="276.4" x2="368.3" y2="347.0" stroke="#46494e" stroke-width="1" stroke-opacity="0.87"/><line x1="528.9" y1="208.3" x2="558.1" y2="212.5" stroke="#46494e" stroke-width="1" stroke-opacity="0.11"/><line x1="558.1" y1="212.5" x2="594.1" y2="217.7" stroke="#46494e" stroke-width="1" stroke-opacity="0.26"/><line x1="594.1" y1="217.7" x2="639.7" y2="224.2" stroke="#46494e" stroke-width="1" stroke-opacity="0.41"/><line x1="639.7" y1="224.2" x2="699.2" y2="232.7" stroke="#46494e" stroke-width="1" stroke-opacity="0.55"/><line x1="699.2" y1="232.7" x2="780.2" y2="244.3" stroke="#46494e" stroke-width="1" stroke-opacity="0.68"/><line x1="780.2" y1="244.3" x2="896.9" y2="261.0" stroke="#46494e" stroke-width="1" stroke-opacity="0.78"/><line x1="896.9" y1="261.0" x2="1079.6" y2="287.2" stroke="#46494e" stroke-width="1" stroke-opacity="0.82"/><line x1="1079.6" y1="287.2" x2="1406.4" y2="333.9" stroke="#46494e" stroke-width="1" stroke-opacity="0.80"/><line x1="927.9" y1="201.1" x2="913.4" y2="205.5" stroke="#46494e" stroke-width="1" stroke-opacity="0.08"/><line x1="913.4" y1="205.5" x2="894.3" y2="211.3" stroke="#46494e" stroke-width="1" stroke-opacity="0.24"/><line x1="894.3" y1="211.3" x2="868.2" y2="219.3" stroke="#46494e" stroke-width="1" stroke-opacity="0.40"/><line x1="868.2" y1="219.3" x2="830.0" y2="230.9" stroke="#46494e" stroke-width="1" stroke-opacity="0.55"/><line x1="830.0" y1="230.9" x2="769.2" y2="249.4" stroke="#46494e" stroke-width="1" stroke-opacity="0.70"/><line x1="769.2" y1="249.4" x2="657.1" y2="283.5" stroke="#46494e" stroke-width="1" stroke-opacity="0.82"/><line x1="657.1" y1="283.5" x2="381.7" y2="367.3" stroke="#46494e" stroke-width="1" stroke-opacity="0.90"/><line x1="510.5" y1="209.8" x2="538.9" y2="214.3" stroke="#46494e" stroke-width="1" stroke-opacity="0.12"/><line x1="538.9" y1="214.3" x2="574.2" y2="219.9" stroke="#46494e" stroke-width="1" stroke-opacity="0.28"/><line x1="574.2" y1="219.9" x2="619.3" y2="227.1" stroke="#46494e" stroke-width="1" stroke-opacity="0.43"/><line x1="619.3" y1="227.1" x2="679.1" y2="236.6" stroke="#46494e" stroke-width="1" stroke-opacity="0.57"/><line x1="679.1" y1="236.6" x2="762.0" y2="249.7" stroke="#46494e" stroke-width="1" stroke-opacity="0.71"/><line x1="762.0" y1="249.7" x2="884.7" y2="269.2" stroke="#46494e" stroke-width="1" stroke-opacity="0.81"/><line x1="884.7" y1="269.2" x2="1084.9" y2="301.0" stroke="#46494e" stroke-width="1" stroke-opacity="0.86"/><line x1="1084.9" y1="301.0" x2="1469.6" y2="362.1" stroke="#46494e" stroke-width="1" stroke-opacity="0.83"/><line x1="940.8" y1="201.7" x2="927.7" y2="206.3" stroke="#46494e" stroke-width="1" stroke-opacity="0.09"/><line x1="927.7" y1="206.3" x2="910.5" y2="212.4" stroke="#46494e" stroke-width="1" stroke-opacity="0.25"/><line x1="910.5" y1="212.4" x2="886.6" y2="220.8" stroke="#46494e" stroke-width="1" stroke-opacity="0.41"/><line x1="886.6" y1="220.8" x2="851.4" y2="233.2" stroke="#46494e" stroke-width="1" stroke-opacity="0.57"/><line x1="851.4" y1="233.2" x2="794.3" y2="253.3" stroke="#46494e" stroke-width="1" stroke-opacity="0.72"/><line x1="794.3" y1="253.3" x2="685.7" y2="291.6" stroke="#46494e" stroke-width="1" stroke-opacity="0.85"/><line x1="685.7" y1="291.6" x2="398.5" y2="392.8" stroke="#46494e" stroke-width="1" stroke-opacity="0.94"/><line x1="490.8" y1="211.3" x2="518.1" y2="216.2" stroke="#46494e" stroke-width="1" stroke-opacity="0.13"/><line x1="518.1" y1="216.2" x2="552.4" y2="222.3" stroke="#46494e" stroke-width="1" stroke-opacity="0.29"/><line x1="552.4" y1="222.3" x2="596.7" y2="230.2" stroke="#46494e" stroke-width="1" stroke-opacity="0.45"/><line x1="596.7" y1="230.2" x2="656.4" y2="240.9" stroke="#46494e" stroke-width="1" stroke-opacity="0.59"/><line x1="656.4" y1="240.9" x2="741.0" y2="256.0" stroke="#46494e" stroke-width="1" stroke-opacity="0.73"/><line x1="741.0" y1="256.0" x2="870.1" y2="279.0" stroke="#46494e" stroke-width="1" stroke-opacity="0.84"/><line x1="870.1" y1="279.0" x2="1091.4" y2="318.5" stroke="#46494e" stroke-width="1" stroke-opacity="0.90"/><line x1="954.1" y1="202.4" x2="942.7" y2="207.1" stroke="#46494e" stroke-width="1" stroke-opacity="0.10"/><line x1="942.7" y1="207.1" x2="927.5" y2="213.5" stroke="#46494e" stroke-width="1" stroke-opacity="0.26"/><line x1="927.5" y1="213.5" x2="906.2" y2="222.4" stroke="#46494e" stroke-width="1" stroke-opacity="0.42"/><line x1="906.2" y1="222.4" x2="874.5" y2="235.7" stroke="#46494e" stroke-width="1" stroke-opacity="0.58"/><line x1="874.5" y1="235.7" x2="822.0" y2="257.6" stroke="#46494e" stroke-width="1" stroke-opacity="0.73"/><line x1="822.0" y1="257.6" x2="718.7" y2="300.9" stroke="#46494e" stroke-width="1" stroke-opacity="0.87"/><line x1="718.7" y1="300.9" x2="420.2" y2="425.8" stroke="#46494e" stroke-width="1" stroke-opacity="0.97"/><line x1="495.4" y1="218.3" x2="528.4" y2="225.0" stroke="#46494e" stroke-width="1" stroke-opacity="0.30"/><line x1="528.4" y1="225.0" x2="571.6" y2="233.8" stroke="#46494e" stroke-width="1" stroke-opacity="0.46"/><line x1="571.6" y1="233.8" x2="630.7" y2="245.8" stroke="#46494e" stroke-width="1" stroke-opacity="0.61"/><line x1="630.7" y1="245.8" x2="716.5" y2="263.3" stroke="#46494e" stroke-width="1" stroke-opacity="0.76"/><line x1="716.5" y1="263.3" x2="852.3" y2="290.9" stroke="#46494e" stroke-width="1" stroke-opacity="0.87"/><line x1="852.3" y1="290.9" x2="1100.0" y2="341.3" stroke="#46494e" stroke-width="1" stroke-opacity="0.93"/><line x1="968.0" y1="203.0" x2="958.3" y2="208.0" stroke="#46494e" stroke-width="1" stroke-opacity="0.10"/><line x1="958.3" y1="208.0" x2="945.3" y2="214.7" stroke="#46494e" stroke-width="1" stroke-opacity="0.27"/><line x1="945.3" y1="214.7" x2="927.1" y2="224.1" stroke="#46494e" stroke-width="1" stroke-opacity="0.43"/><line x1="927.1" y1="224.1" x2="899.4" y2="238.4" stroke="#46494e" stroke-width="1" stroke-opacity="0.59"/><line x1="899.4" y1="238.4" x2="852.7" y2="262.4" stroke="#46494e" stroke-width="1" stroke-opacity="0.75"/><line x1="852.7" y1="262.4" x2="757.0" y2="311.7" stroke="#46494e" stroke-width="1" stroke-opacity="0.89"/><line x1="757.0" y1="311.7" x2="449.5" y2="470.1" stroke="#46494e" stroke-width="1"/><line x1="501.9" y1="228.0" x2="543.3" y2="237.8" stroke="#46494e" stroke-width="1" stroke-opacity="0.47"/><line x1="543.3" y1="237.8" x2="601.2" y2="251.5" stroke="#46494e" stroke-width="1" stroke-opacity="0.63"/><line x1="601.2" y1="251.5" x2="687.5" y2="271.9" stroke="#46494e" stroke-width="1" stroke-opacity="0.78"/><line x1="687.5" y1="271.9" x2="830.3" y2="305.7" stroke="#46494e" stroke-width="1" stroke-opacity="0.90"/><line x1="830.3" y1="305.7" x2="1111.7" y2="372.2" stroke="#46494e" stroke-width="1" stroke-opacity="0.97"/><line x1="997.5" y1="204.4" x2="991.8" y2="209.9" stroke="#46494e" stroke-width="1" stroke-opacity="0.11"/><line x1="991.8" y1="209.9" x2="984.1" y2="217.3" stroke="#46494e" stroke-width="1" stroke-opacity="0.28"/><line x1="984.1" y1="217.3" x2="973.0" y2="227.9" stroke="#46494e" stroke-width="1" stroke-opacity="0.44"/><line x1="973.0" y1="227.9" x2="955.7" y2="244.4" stroke="#46494e" stroke-width="1" stroke-opacity="0.61"/><line x1="955.7" y1="244.4" x2="925.2" y2="273.7" stroke="#46494e" stroke-width="1" stroke-opacity="0.77"/><line x1="925.2" y1="273.7" x2="856.2" y2="339.8" stroke="#46494e" stroke-width="1" stroke-opacity="0.92"/><line x1="856.2" y1="339.8" x2="554.2" y2="629.0" stroke="#46494e" stroke-width="1"/><line x1="475.0" y1="247.4" x2="527.0" y2="265.6" stroke="#46494e" stroke-width="1" stroke-opacity="0.65"/><line x1="527.0" y1="265.6" x2="610.2" y2="294.9" stroke="#46494e" stroke-width="1" stroke-opacity="0.81"/><line x1="610.2" y1="294.9" x2="765.1" y2="349.3" stroke="#46494e" stroke-width="1" stroke-opacity="0.95"/><line x1="765.1" y1="349.3" x2="1154.6" y2="486.2" stroke="#46494e" stroke-width="1"/><line x1="1013.2" y1="205.2" x2="1009.8" y2="210.9" stroke="#46494e" stroke-width="1" stroke-opacity="0.11"/><line x1="1009.8" y1="210.9" x2="1005.1" y2="218.7" stroke="#46494e" stroke-width="1" stroke-opacity="0.28"/><line x1="1005.1" y1="218.7" x2="998.4" y2="230.0" stroke="#46494e" stroke-width="1" stroke-opacity="0.44"/><line x1="998.4" y1="230.0" x2="987.7" y2="247.9" stroke="#46494e" stroke-width="1" stroke-opacity="0.61"/><line x1="987.7" y1="247.9" x2="968.3" y2="280.4" stroke="#46494e" stroke-width="1" stroke-opacity="0.77"/><line x1="968.3" y1="280.4" x2="921.9" y2="358.4" stroke="#46494e" stroke-width="1" stroke-opacity="0.93"/><line x1="921.9" y1="358.4" x2="662.7" y2="793.6" stroke="#46494e" stroke-width="1"/><line x1="479.5" y1="274.7" x2="557.0" y2="310.7" stroke="#46494e" stroke-width="1" stroke-opacity="0.82"/><line x1="557.0" y1="310.7" x2="714.0" y2="383.5" stroke="#46494e" stroke-width="1" stroke-opacity="0.97"/><line x1="714.0" y1="383.5" x2="1201.0" y2="609.5" stroke="#46494e" stroke-width="1"/><line x1="1029.5" y1="206.0" x2="1028.6" y2="211.9" stroke="#46494e" stroke-width="1" stroke-opacity="0.11"/><line x1="1028.6" y1="211.9" x2="1027.4" y2="220.2" stroke="#46494e" stroke-width="1" stroke-opacity="0.28"/><line x1="1027.4" y1="220.2" x2="1025.6" y2="232.2" stroke="#46494e" stroke-width="1" stroke-opacity="0.44"/><line x1="1025.6" y1="232.2" x2="1022.8" y2="251.6" stroke="#46494e" stroke-width="1" stroke-opacity="0.61"/><line x1="1022.8" y1="251.6" x2="1017.4" y2="288.1" stroke="#46494e" stroke-width="1" stroke-opacity="0.77"/><line x1="1017.4" y1="288.1" x2="1003.7" y2="381.5" stroke="#46494e" stroke-width="1" stroke-opacity="0.93"/><line x1="1003.7" y1="381.5" x2="892.0" y2="1141.5" stroke="#46494e" stroke-width="1"/><line x1="488.7" y1="331.0" x2="639.1" y2="433.7" stroke="#46494e" stroke-width="1" stroke-opacity="0.98"/><line x1="639.1" y1="433.7" x2="1306.3" y2="889.2" stroke="#46494e" stroke-width="1"/><line x1="1046.5" y1="206.8" x2="1048.4" y2="213.0" stroke="#46494e" stroke-width="1" stroke-opacity="0.11"/><line x1="1048.4" y1="213.0" x2="1051.0" y2="221.7" stroke="#46494e" stroke-width="1" stroke-opacity="0.28"/><line x1="1051.0" y1="221.7" x2="1054.9" y2="234.6" stroke="#46494e" stroke-width="1" stroke-opacity="0.44"/><line x1="1054.9" y1="234.6" x2="1061.3" y2="255.8" stroke="#46494e" stroke-width="1" stroke-opacity="0.61"/><line x1="1061.3" y1="255.8" x2="1073.7" y2="296.9" stroke="#46494e" stroke-width="1" stroke-opacity="0.77"/><line x1="1073.7" y1="296.9" x2="1108.1" y2="411.0" stroke="#46494e" stroke-width="1" stroke-opacity="0.93"/><line x1="397.5" y1="358.2" x2="518.5" y2="514.5" stroke="#46494e" stroke-width="1" stroke-opacity="0.99"/><line x1="518.5" y1="514.5" x2="1777.2" y2="2140.0" stroke="#46494e" stroke-width="1"/><line x1="1064.3" y1="207.6" x2="1069.3" y2="214.2" stroke="#46494e" stroke-width="1" stroke-opacity="0.11"/><line x1="1069.3" y1="214.2" x2="1076.2" y2="223.4" stroke="#46494e" stroke-width="1" stroke-opacity="0.27"/><line x1="1076.2" y1="223.4" x2="1086.5" y2="237.2" stroke="#46494e" stroke-width="1" stroke-opacity="0.44"/><line x1="1086.5" y1="237.2" x2="1103.9" y2="260.4" stroke="#46494e" stroke-width="1" stroke-opacity="0.60"/><line x1="1083.0" y1="208.5" x2="1091.2" y2="215.4" stroke="#46494e" stroke-width="1" stroke-opacity="0.11"/></g><g shape-rendering="crispEdges"><line x1="279.9" y1="176.8" x2="60904.9" y2="17320.9" stroke="#f0344f" stroke-width="1"/><line x1="1026.8" y1="174.0" x2="-24569.1" y2="17320.9" stroke="#2b8ef0" stroke-width="1"/></g><line x1="802.5" y1="105" x2="802.5" y2="545" stroke="#8ad81a" stroke-width="1.3"/><defs><linearGradient id="topg" gradientUnits="userSpaceOnUse" x1="787.1" y1="247.7" x2="827.0" y2="299.3"><stop offset="0" stop-color="#46fa46"/><stop offset="1" stop-color="#2ce42c"/></linearGradient></defs><polygon points="723.4,383.0 822.4,427.9 874.2,364.7 789.0,337.9" fill="#0b5a0b" fill-opacity="0.2"/><line x1="789.0" y1="337.9" x2="874.2" y2="364.7" stroke="#e09020" stroke-width="1" stroke-opacity="0.9" stroke-linecap="round"/><line x1="789.0" y1="337.9" x2="723.4" y2="383.0" stroke="#e09020" stroke-width="1" stroke-opacity="0.9" stroke-linecap="round"/><line x1="789.0" y1="337.9" x2="787.1" y2="247.7" stroke="#e09020" stroke-width="1" stroke-opacity="0.9" stroke-linecap="round"/><polygon points="709.2,272.6 827.0,299.3 822.4,427.9 723.4,383.0" fill="#006400" fill-opacity="0.78"/><polygon points="827.0,299.3 885.9,262.2 874.2,364.7 822.4,427.9" fill="#005a00" fill-opacity="0.78"/><polygon points="709.2,272.6 827.0,299.3 885.9,262.2 787.1,247.7" fill="url(#topg)"/><line x1="802.5" y1="240" x2="802.5" y2="300" stroke="#8ad81a" stroke-width="1.3" stroke-opacity="0.5"/><circle cx="802.2" cy="324.5" r="100" fill="none" stroke="#a0a0a0" stroke-opacity="0.12" stroke-width="1"/><path d="M851.6,397.4 L852.7,397.0 L853.8,396.5 L854.9,396.0 L856.0,395.5 L857.1,395.0 L858.1,394.4 L859.2,393.8 L860.2,393.2 L861.2,392.6 L862.3,391.9 L863.3,391.2 L864.3,390.5 L865.2,389.7 L866.2,389.0 L867.2,388.2 L868.1,387.4 L869.0,386.5 L869.9,385.6 L870.8,384.7 L871.7,383.8 L872.5,382.9 L873.4,381.9 L874.2,380.9 L875.0,379.9 L875.7,378.8 L876.5,377.8 L877.2,376.7 L878.0,375.6 L878.7,374.4 L879.3,373.2 L880.0,372.1 L880.6,370.8 L881.2,369.6 L881.8,368.3 L882.4,367.1 L882.9,365.8 L883.4,364.4 L883.9,363.1 L884.4,361.7 L884.8,360.3 L885.2,358.9 L885.6,357.5 L886.0,356.1 L886.3,354.6 L886.6,353.1 L886.9,351.6 L887.1,350.1 L887.4,348.6 L887.4,348.6 L887.6,347.0 L887.7,345.5 L887.8,343.9 L887.9,342.3 L888.0,340.7 L888.1,339.1 L888.1,337.5 L888.0,335.8 L888.0,334.2 L887.9,332.5 L887.8,330.8 L887.7,329.2 L887.5,327.5 L887.3,325.8 L887.0,324.1 L886.8,322.4 L886.5,320.7 L886.1,318.9 L885.8,317.2 L885.4,315.5 L884.9,313.8 L884.5,312.1 L884.0,310.3 L883.4,308.6 L882.9,306.9 L882.3,305.2 L881.7,303.5 L881.0,301.8 L880.4,300.1 L879.7,298.4 L878.9,296.7 L878.2,295.0 L877.4,293.3 L876.5,291.7 L875.7,290.0 L874.8,288.4 L873.9,286.7 L873.0,285.1 L872.0,283.5 L871.0,281.9 L870.0,280.4 L869.0,278.8 L867.9,277.3 L866.8,275.8 L865.7,274.3 L864.6,272.8 L863.4,271.3 L862.2,269.9 L861.0,268.4 L859.8,267.0 L858.6,265.7 L857.3,264.3 L856.0,263.0 L854.7,261.7 L853.4,260.4 L852.1,259.2 L850.7,257.9 L849.4,256.7 L848.0,255.6 L846.6,254.4 L845.2,253.3 L843.8,252.2 L842.4,251.2 L840.9,250.1 L839.5,249.1 L838.0,248.2 L836.6,247.2 L835.1,246.3 L833.6,245.4 L832.1,244.6 L830.6,243.8 L829.1,243.0 L827.6,242.3 L826.1,241.6 L824.6,240.9 L823.1,240.2 L821.6,239.6 L820.1,239.0 L818.6,238.5 L817.1,238.0 L815.6,237.5 L814.1,237.0 L812.6,236.6 L811.1,236.2 L809.6,235.9 L808.1,235.5 L806.6,235.3 L805.1,235.0 L803.6,234.8 L802.2,234.6 L800.7,234.4 L799.3,234.3 L797.8,234.2 L796.4,234.1 L795.0,234.1 L793.6,234.1 L792.2,234.1 L790.8,234.2 L789.4,234.3 L788.0,234.4 L786.7,234.5 L785.3,234.7 L784.0,234.9 L782.7,235.2 L781.4,235.4 L780.1,235.7 L778.9,236.0 L777.6,236.4 L776.4,236.8 L775.1,237.2 L773.9,237.6 L772.8,238.0 L771.6,238.5 L770.4,239.0 L769.3,239.5 L768.2,240.1 L767.1,240.6 L766.0,241.2 L764.9,241.9 L763.9,242.5 L762.9,243.2 L761.9,243.8 L760.9,244.5 L759.9,245.3 L758.9,246.0 L758.0,246.8 L757.1,247.6 L756.2,248.4 L755.3,249.2 L754.5,250.0 L753.7,250.9" fill="none" stroke="#3470b8" stroke-opacity="0.7" stroke-width="3.4"/><path d="M825.5,239.3 L824.9,238.8 L824.2,238.3 L823.5,237.8 L822.9,237.3 L822.2,236.9 L821.5,236.5 L820.7,236.1 L820.0,235.7 L819.3,235.4 L818.5,235.1 L817.8,234.8 L817.0,234.5 L816.2,234.3 L815.4,234.1 L814.6,233.9 L813.8,233.8 L812.9,233.7 L812.1,233.6 L811.2,233.5 L810.4,233.5 L809.5,233.5 L808.6,233.5 L807.7,233.6 L806.8,233.6 L805.9,233.8 L805.0,233.9 L804.0,234.1 L803.1,234.3 L802.2,234.6 L802.2,234.6 L801.2,234.9 L800.3,235.2 L799.3,235.5 L798.3,235.9 L797.3,236.4 L796.3,236.8 L795.3,237.3 L794.3,237.8 L793.3,238.4 L792.3,239.0 L791.3,239.6 L790.3,240.3 L789.3,241.0 L788.3,241.7 L787.2,242.5 L786.2,243.3 L785.2,244.2 L784.2,245.0 L783.1,245.9 L782.1,246.9 L781.1,247.9 L780.1,248.9 L779.0,250.0 L778.0,251.1 L777.0,252.2 L776.0,253.3 L775.0,254.5 L774.0,255.8 L773.0,257.0 L772.0,258.3 L771.0,259.6 L770.0,261.0 L769.0,262.4 L768.1,263.8 L767.1,265.3 L766.2,266.7 L765.2,268.2 L764.3,269.8 L763.4,271.3 L762.5,272.9 L761.6,274.5 L760.7,276.2 L759.8,277.9 L759.0,279.5 L758.2,281.3 L757.3,283.0 L756.5,284.7 L755.7,286.5 L755.0,288.3 L754.2,290.1 L753.5,292.0 L752.7,293.8 L752.0,295.7 L751.4,297.5 L750.7,299.4 L750.1,301.3 L749.4,303.2 L748.8,305.2 L748.3,307.1 L747.7,309.0 L747.2,311.0 L746.6,312.9 L746.1,314.9 L745.7,316.8 L745.2,318.8 L744.8,320.7 L744.4,322.7 L744.0,324.6 L743.7,326.6 L743.3,328.5 L743.0,330.5 L742.7,332.4 L742.5,334.3 L742.3,336.2 L742.0,338.2 L741.9,340.0 L741.7,341.9 L741.6,343.8 L741.4,345.7 L741.4,347.5 L741.3,349.3 L741.3,351.2 L741.2,352.9 L741.2,354.7 L741.3,356.5 L741.3,358.2 L741.4,359.9 L741.5,361.6 L741.6,363.3 L741.8,364.9 L741.9,366.6 L742.1,368.2 L742.4,369.7 L742.6,371.3 L742.8,372.8 L743.1,374.3 L743.4,375.8 L743.7,377.2 L744.1,378.6 L744.4,380.0 L744.8,381.4 L745.2,382.7 L745.6,384.0 L746.0,385.2 L746.5,386.5 L746.9,387.6 L747.4,388.8 L747.9,389.9 L748.4,391.1 L749.0,392.1 L749.5,393.2 L750.1,394.2 L750.7,395.1 L751.2,396.1 L751.8,397.0 L752.5,397.9 L753.1,398.7 L753.7,399.5 L754.4,400.3 L755.0,401.0 L755.7,401.8 L756.4,402.4 L757.1,403.1 L757.8,403.7 L758.5,404.3 L759.2,404.8 L759.9,405.4 L760.7,405.8 L761.4,406.3 L762.2,406.7 L762.9,407.1 L763.7,407.5 L764.5,407.8 L765.2,408.1 L766.0,408.4 L766.8,408.7 L767.6,408.9 L768.4,409.1 L769.2,409.2 L770.0,409.4 L770.8,409.5 L771.6,409.5 L772.4,409.6 L773.3,409.6 L774.1,409.6 L774.9,409.6 L775.7,409.5 L776.5,409.4 L777.4,409.3 L778.2,409.2" fill="none" stroke="#b83550" stroke-opacity="0.55" stroke-width="3.4"/><path d="M890.2,324.5 L890.5,325.2 L890.9,325.9 L891.2,326.5 L891.5,327.2 L891.8,327.9 L892.0,328.6 L892.2,329.3 L892.4,330.0 L892.6,330.7 L892.7,331.5 L892.8,332.2 L892.9,332.9 L892.9,333.6 L893.0,334.4 L892.9,335.1 L892.9,335.8 L892.8,336.6 L892.7,337.3 L892.6,338.1 L892.4,338.8 L892.3,339.6 L892.0,340.3 L891.8,341.1 L891.5,341.8 L891.2,342.6 L890.8,343.3 L890.4,344.1 L890.0,344.8 L889.5,345.6 L889.0,346.3 L888.5,347.1 L888.0,347.8 L887.4,348.6 L887.4,348.6 L886.7,349.3 L886.1,350.1 L885.4,350.8 L884.6,351.6 L883.9,352.3 L883.1,353.0 L882.2,353.7 L881.3,354.5 L880.4,355.2 L879.5,355.9 L878.5,356.6 L877.5,357.3 L876.4,358.0 L875.3,358.7 L874.2,359.3 L873.0,360.0 L871.8,360.6 L870.6,361.3 L869.3,361.9 L868.0,362.6 L866.7,363.2 L865.3,363.8 L863.9,364.4 L862.5,365.0 L861.1,365.5 L859.6,366.1 L858.0,366.6 L856.5,367.2 L854.9,367.7 L853.3,368.2 L851.7,368.7 L850.0,369.2 L848.3,369.6 L846.6,370.1 L844.8,370.5 L843.1,370.9 L841.3,371.3 L839.5,371.7 L837.6,372.0 L835.8,372.4 L833.9,372.7 L832.0,373.0 L830.1,373.3 L828.2,373.6 L826.2,373.8 L824.3,374.0 L822.3,374.3 L820.3,374.4 L818.3,374.6 L816.3,374.8 L814.3,374.9 L812.3,375.0 L810.3,375.1 L808.2,375.2 L806.2,375.2 L804.2,375.3 L802.1,375.3 L800.1,375.3 L798.1,375.2 L796.0,375.2 L794.0,375.1 L792.0,375.0 L790.0,374.9 L788.0,374.8 L786.0,374.6 L784.0,374.4 L782.0,374.3 L780.0,374.0 L778.1,373.8 L776.1,373.6 L774.2,373.3 L772.3,373.0 L770.4,372.7 L768.5,372.4 L766.7,372.0 L764.8,371.7 L763.0,371.3 L761.2,370.9 L759.5,370.5 L757.7,370.1 L756.0,369.6 L754.3,369.1 L752.6,368.7 L751.0,368.2 L749.4,367.7 L747.8,367.2 L746.3,366.6 L744.7,366.1 L743.2,365.5 L741.8,364.9 L740.4,364.4 L739.0,363.8 L737.6,363.2 L736.3,362.5 L735.0,361.9 L733.7,361.3 L732.5,360.6 L731.3,360.0 L730.1,359.3 L729.0,358.6 L727.9,358.0 L726.8,357.3 L725.8,356.6 L724.8,355.9 L723.9,355.2 L723.0,354.4 L722.1,353.7 L721.3,353.0 L720.4,352.3 L719.7,351.5 L718.9,350.8 L718.2,350.1 L717.6,349.3 L716.9,348.6 L716.4,347.8 L715.8,347.1 L715.3,346.3 L714.8,345.6 L714.3,344.8 L713.9,344.1 L713.5,343.3 L713.2,342.5 L712.8,341.8 L712.5,341.0 L712.3,340.3 L712.1,339.5 L711.9,338.8 L711.7,338.0 L711.6,337.3 L711.5,336.6 L711.4,335.8 L711.4,335.1 L711.4,334.3 L711.4,333.6 L711.4,332.9 L711.5,332.2 L711.6,331.4 L711.8,330.7 L711.9,330.0 L712.1,329.3 L712.3,328.6 L712.6,327.9 L712.8,327.2 L713.1,326.5 L713.5,325.8 L713.8,325.2" fill="none" stroke="#5aa82a" stroke-opacity="0.75" stroke-width="3.4"/><polygon points="787.7,310.3 787.4,293.7 776.5,299.2 777.1,316.4" fill="#c05030" fill-opacity="0.55"/><polygon points="823.9,307.3 839.3,311.1 840.3,294.4 824.4,291.0" fill="#30a0d0" fill-opacity="0.6"/><polygon points="810.0,340.5 825.5,345.3 816.1,353.1 800.2,347.9" fill="#70c030" fill-opacity="0.7"/><line x1="709.2" y1="272.6" x2="827.0" y2="299.3" stroke="#ff9a1a" stroke-width="2" stroke-opacity="1.0" stroke-linecap="round"/><line x1="827.0" y1="299.3" x2="885.9" y2="262.2" stroke="#ff9a1a" stroke-width="2" stroke-opacity="1.0" stroke-linecap="round"/><line x1="885.9" y1="262.2" x2="787.1" y2="247.7" stroke="#ff9a1a" stroke-width="2" stroke-opacity="1.0" stroke-linecap="round"/><line x1="787.1" y1="247.7" x2="709.2" y2="272.6" stroke="#ff9a1a" stroke-width="2" stroke-opacity="1.0" stroke-linecap="round"/><line x1="709.2" y1="272.6" x2="723.4" y2="383.0" stroke="#ff9a1a" stroke-width="2" stroke-opacity="1.0" stroke-linecap="round"/><line x1="827.0" y1="299.3" x2="822.4" y2="427.9" stroke="#ff9a1a" stroke-width="2" stroke-opacity="1.0" stroke-linecap="round"/><line x1="885.9" y1="262.2" x2="874.2" y2="364.7" stroke="#ff9a1a" stroke-width="2" stroke-opacity="1.0" stroke-linecap="round"/><line x1="723.4" y1="383.0" x2="822.4" y2="427.9" stroke="#ff9a1a" stroke-width="2" stroke-opacity="1.0" stroke-linecap="round"/><line x1="822.4" y1="427.9" x2="874.2" y2="364.7" stroke="#ff9a1a" stroke-width="2" stroke-opacity="1.0" stroke-linecap="round"/><line x1="802.2" y1="324.5" x2="718.9" y2="380.3" stroke="#3a90f0" stroke-width="1.6" stroke-opacity="0.85"/><line x1="802.2" y1="324.5" x2="916.0" y2="356.7" stroke="#c04050" stroke-width="1.6" stroke-opacity="0.55"/><line x1="802.2" y1="324.5" x2="802.2" y2="205.0" stroke="#8ad81a" stroke-width="1.6" stroke-opacity="0.6"/><polygon points="792.1,205.1 802.2,176.0 812.2,205.1 812.1,205.2 811.8,205.4 811.3,205.5 810.7,205.6 809.9,205.7 809.0,205.8 807.9,205.9 806.7,206.0 805.5,206.0 804.1,206.1 802.8,206.1 801.4,206.1 800.0,206.1 798.7,206.0 797.5,206.0 796.3,205.9 795.2,205.8 794.3,205.7 793.5,205.6 792.9,205.5 792.5,205.3 792.2,205.2" fill="#6f9a2c" fill-opacity="0.9"/><polygon points="912.7,365.2 912.7,364.4 912.8,363.5 912.9,362.5 913.1,361.3 913.3,360.1 913.6,358.8 913.9,357.4 914.3,356.1 914.7,354.7 915.1,353.4 915.6,352.2 916.0,351.0 916.5,350.0 916.9,349.0 917.3,348.3 917.7,347.6 918.1,347.2 918.4,346.9 918.6,346.8 918.9,346.9 944.5,364.8 913.3,366.6 913.0,366.5 912.9,366.2 912.8,365.8" fill="#b83a55" fill-opacity="0.75"/><polygon points="694.7,396.5 711.6,371.6 712.1,371.0 712.8,370.5 713.6,370.1 714.5,369.9 715.5,370.0 716.5,370.2 717.6,370.6 718.7,371.1 719.9,371.9 721.0,372.8 722.1,373.8 723.1,375.0 724.1,376.2 724.9,377.5 725.7,378.9 726.3,380.3 726.8,381.7 727.1,383.0 727.3,384.4 727.4,385.6 727.3,386.7 727.0,387.7 726.6,388.6 726.1,389.3 725.4,389.8 724.6,390.2 723.8,390.4" fill="#3276c0" fill-opacity="0.8"/></svg><div style="left:523px;top:114px;width:104px;height:26px;background:rgba(50,60,80,0.5);"></div><svg style="left:532px;top:118px;" width="6" height="18" viewBox="0 0 6 18"><circle cx="3" cy="3" r="1.9" fill="#e6e6e6"/><circle cx="3" cy="9" r="1.9" fill="#e6e6e6"/><circle cx="3" cy="15" r="1.9" fill="#e6e6e6"/></svg><span class="t" style="left:547px;top:119px;color:#d8dce2;letter-spacing:0.3px;font-weight:normal;">Perspective</span><svg style="left:1010px;top:104px;" width="82" height="82" viewBox="1010 104 82 82"><line x1="1049.9" y1="145.0" x2="1049.9" y2="119.7" stroke="#87d603" stroke-width="2"/><line x1="1049.9" y1="145.0" x2="1074.9" y2="152.8" stroke="#f5335a" stroke-width="2"/><line x1="1049.9" y1="145.0" x2="1033.9" y2="155.9" stroke="#298cf5" stroke-width="2"/><circle cx="1025" cy="138.9" r="5" fill="#8f1f2f"/><circle cx="1066" cy="135.8" r="5" fill="#1a4f8f"/><circle cx="1049.9" cy="171.6" r="5" fill="#4b7a0a"/><circle cx="1049.9" cy="119.7" r="8" fill="#87d603"/><circle cx="1074.9" cy="152.8" r="8" fill="#f5335a"/><circle cx="1033.9" cy="155.9" r="8" fill="#298cf5"/><text x="1049.9" y="124.5" font-family="Liberation Sans" font-size="12" fill="#303030" text-anchor="middle">Y</text><text x="1074.9" y="157.6" font-family="Liberation Sans" font-size="12" fill="#303030" text-anchor="middle">X</text><text x="1033.9" y="160.7" font-family="Liberation Sans" font-size="12" fill="#303030" text-anchor="middle">Z</text></svg><div style="left:512px;top:557px;width:581px;height:34px;background:#333b4f;"></div><span class="t" style="left:522px;top:566px;color:#ccced3;letter-spacing:0.5px;font-weight:normal;">Output</span><span class="t" style="left:586px;top:566px;color:#ccced3;letter-spacing:0.5px;font-weight:normal;">Debugger</span><span class="t" style="left:670px;top:566px;color:#ccced3;letter-spacing:0.5px;font-weight:normal;">Audio</span><span class="t" style="left:725px;top:566px;color:#ccced3;letter-spacing:0.5px;font-weight:normal;">Animation</span><span class="t" style="left:486px;width:600px;text-align:right;top:566px;color:#9a9da6;letter-spacing:0.5px;">3.3.2.stable.mono</span><div style="left:1103px;top:43px;width:82px;height:28px;background:#333b4f;"></div><span class="t" style="left:1113px;top:48px;color:#ccced3;letter-spacing:0.5px;font-weight:normal;">Inspector</span><div style="left:1185px;top:43px;width:56px;height:28px;background:#262c3b;"></div><span class="t" style="left:1197px;top:48px;color:#7d818b;letter-spacing:0.5px;font-weight:normal;">Node</span><svg style="left:1364px;top:47px;" width="6" height="18" viewBox="0 0 6 18"><circle cx="3" cy="3" r="2" fill="#8a8d96"/><circle cx="3" cy="9" r="2" fill="#8a8d96"/><circle cx="3" cy="15" r="2" fill="#8a8d96"/></svg><div style="left:1103px;top:71px;width:272px;height:520px;background:#333b4f;"></div><svg style="left:1113px;top:80px;" width="16" height="16" viewBox="0 0 16 16"><path d="M2 1h7l4 4v10H2z" fill="#e0e0e0"/><path d="M9 1v4h4" fill="#b0b0b0"/><path d="M12 9v6M9 12h6" stroke="#5fd38d" stroke-width="2"/></svg><svg style="left:1145px;top:80px;" width="16" height="16" viewBox="0 0 16 16"><path d="M1 3h5l1.5 1.5H14V7H4L1 14z" fill="#e0e0e0"/><path d="M4 8h11l-2.5 6H1z" fill="#e0e0e0"/></svg><svg style="left:1177px;top:80px;" width="16" height="16" viewBox="0 0 16 16"><path d="M1 1h11l3 3v11H1z" fill="#6f7380"/><rect x="4" y="1" width="6" height="4" fill="#333b4f"/><circle cx="8" cy="10" r="2" fill="#333b4f"/></svg><svg style="left:1299px;top:80px;" width="10" height="16" viewBox="0 0 10 16"><path d="M7 2.5L3 8l4 5.5" fill="none" stroke="#e0e0e0" stroke-width="1.8"/></svg><svg style="left:1323px;top:80px;" width="10" height="16" viewBox="0 0 10 16"><path d="M3 2.5L7 8l-4 5.5" fill="none" stroke="#6f7380" stroke-width="1.8"/></svg><svg style="left:1349px;top:80px;" width="16" height="16" viewBox="0 0 16 16"><path d="M3.5 8A5 5 0 1 0 8 3" fill="none" stroke="#e0e0e0" stroke-width="2"/><path d="M0.5 6.5L3.5 9.5 6.5 6.5" fill="#e0e0e0"/><path d="M8 5v3.5h3" fill="none" stroke="#e0e0e0" stroke-width="1.8"/></svg><svg style="left:1113px;top:110px;" width="16" height="16" viewBox="0 0 16 16"><g fill="none" stroke="#f98f8f" stroke-width="2"><rect x="3" y="3" width="10" height="10"/><path d="M3 3l10 10"/></g><g fill="#f98f8f"><circle cx="3" cy="3" r="2"/><circle cx="13" cy="3" r="2"/><circle cx="3" cy="13" r="2"/><circle cx="13" cy="13" r="2"/></g></svg><span class="t" style="left:1134px;top:110px;color:#ccced3;letter-spacing:0.5px;font-weight:normal;">MeshInstance</span><svg style="left:1349px;top:110px;" width="16" height="16" viewBox="0 0 16 16"><path d="M4 1v5M4 8v7" stroke="#e0e0e0" stroke-width="2.5"/><rect x="2" y="6" width="4" height="4" fill="#e0e0e0"/><path d="M11 5v10" stroke="#e0e0e0" stroke-width="2.5"/><path d="M8.5 1v3.5a2.5 2.5 0 0 0 5 0V1" fill="none" stroke="#e0e0e0" stroke-width="1.8"/></svg><div style="left:1107px;top:135px;width:264px;height:26px;background:#262c3b;"></div><span class="t" style="left:1113px;top:140px;color:#7d818b;letter-spacing:0.5px;font-weight:normal;">Filter properties</span><svg style="left:1348px;top:140px;" width="16" height="16" viewBox="0 0 16 16"><circle cx="6.5" cy="6.5" r="4.2" fill="none" stroke="#e0e0e0" stroke-width="2"/><path d="M9.5 9.5l4.5 4.5" stroke="#e0e0e0" stroke-width="2.4"/></svg><div style="left:1107px;top:165px;width:262px;height:420px;background:#262c3b;border:1px solid #1a1d28;"></div><div style="left:1362px;top:168px;width:6px;height:415px;background:#2b3140;border-radius:3px;"></div><div style="left:1362px;top:168px;width:6px;height:230px;background:#676c7b;border-radius:3px;"></div><div style="left:1111px;top:169px;width:244px;height:22px;background:#3d4354;"></div><svg style="left:1175px;top:172px;" width="16" height="16" viewBox="0 0 16 16"><g fill="none" stroke="#f98f8f" stroke-width="2"><rect x="3" y="3" width="10" height="10"/><path d="M3 3l10 10"/></g><g fill="#f98f8f"><circle cx="3" cy="3" r="2"/><circle cx="13" cy="3" r="2"/><circle cx="3" cy="13" r="2"/><circle cx="13" cy="13" r="2"/></g></svg><span class="t" style="left:1196px;top:172px;color:#ccced3;letter-spacing:0.5px;font-weight:normal;">MeshInstance</span><span class="t" style="left:1112px;top:215px;color:#ccced3;letter-spacing:0.5px;font-weight:normal;">Mesh</span><svg style="left:1214px;top:215px;" width="16" height="16" viewBox="0 0 16 16"><path d="M5.2 4.6A5 5 0 1 1 3.6 11.2" fill="none" stroke="#e0e0e0" stroke-width="2"/><path d="M1.8 3.2L7.2 2.6 6.2 8z" fill="#e0e0e0"/></svg><div style="left:1233px;top:192px;width:122px;height:62px;background:#1f2430;"></div><svg style="left:1238px;top:215px;" width="16" height="16" viewBox="0 0 16 16"><path d="M8 1.5l6 3v7l-6 3-6-3v-7z" fill="none" stroke="#ffd684" stroke-width="1.8"/><path d="M2 4.5l6 3 6-3M8 7.5v7" fill="none" stroke="#ffd684" stroke-width="1.8"/></svg><svg style="left:1258px;top:190px;" width="66" height="66" viewBox="0 0 66 66"><path d="M4.6 17.5L44.8 24V63.2L4.6 56.7z" fill="#505050"/><path d="M44.8 24L62 7.8V49L44.8 63.2z" fill="#bcbcbc"/><path d="M4.6 17.5L22 2.3 62 7.8 44.8 24z" fill="#d4d4d4"/></svg><svg style="left:1336px;top:219px;" width="12" height="10" viewBox="0 0 12 10"><path d="M2 2.5l4 4 4-4" fill="none" stroke="#d8d8d8" stroke-width="1.5"/></svg><span class="t" style="left:1112px;top:264px;color:#ccced3;letter-spacing:0.5px;font-weight:normal;">Skin</span><div style="left:1233px;top:259px;width:122px;height:26px;background:#1f2430;"></div><span class="t" style="left:978px;width:600px;text-align:center;top:264px;color:#ccced3;letter-spacing:0.5px;">[empty]</span><svg style="left:1336px;top:268px;" width="12" height="10" viewBox="0 0 12 10"><path d="M2 2.5l4 4 4-4" fill="none" stroke="#d8d8d8" stroke-width="1.5"/></svg><span class="t" style="left:1112px;top:293px;color:#ccced3;letter-spacing:0.5px;font-weight:normal;">Skeleton</span><svg style="left:1214px;top:293px;" width="16" height="16" viewBox="0 0 16 16"><path d="M5.2 4.6A5 5 0 1 1 3.6 11.2" fill="none" stroke="#e0e0e0" stroke-width="2"/><path d="M1.8 3.2L7.2 2.6 6.2 8z" fill="#e0e0e0"/></svg><div style="left:1234px;top:290px;width:87px;height:24px;background:#22283a;"></div><span class="t" style="left:978px;width:600px;text-align:center;top:293px;color:#ccced3;letter-spacing:0.5px;">Assign...</span><div style="left:1322px;top:290px;width:33px;height:24px;background:#262c3b;"></div><svg style="left:1333px;top:294px;" width="16" height="16" viewBox="0 0 16 16"><path d="M6 1h4v6H6z" fill="#e0e0e0"/><path d="M3 8h10v3H3z" fill="#e0e0e0"/><path d="M3 12h10l1 3H2z" fill="#e0e0e0"/></svg><div style="left:1111px;top:315px;width:244px;height:43px;background:#313747;"></div><svg style="left:1114px;top:320px;" width="10" height="12" viewBox="0 0 10 12"><path d="M3 2l4 4-4 4" fill="none" stroke="#858992" stroke-width="1.6"/></svg><span class="t" style="left:1130px;top:318px;color:#ccced3;letter-spacing:0.5px;font-weight:normal;">Software Skinning</span><svg style="left:1114px;top:343px;" width="10" height="10" viewBox="0 0 10 10"><path d="M1.5 3l3.5 3.5 3.5-3.5" fill="none" stroke="#858992" stroke-width="1.6"/></svg><span class="t" style="left:1130px;top:340px;color:#ccced3;letter-spacing:0.5px;font-weight:normal;">Material</span><span class="t" style="left:1119px;top:383px;color:#ccced3;letter-spacing:0.5px;font-weight:normal;">0</span><div style="left:1237px;top:359px;width:118px;height:64px;background:#1f2430;"></div><svg style="left:1242px;top:383px;" width="16" height="16" viewBox="0 0 16 16"><path d="M8 1.5l6 3v7l-6 3-6-3v-7z" fill="none" stroke="#ff7fd0" stroke-width="1.8"/><path d="M2 4.5l6 3 6-3M8 7.5v7" fill="none" stroke="#7fe0ff" stroke-width="1.8"/><path d="M14 4.5v7" stroke="#ffe080" stroke-width="1.8"/></svg><svg style="left:1265px;top:364px;" width="56" height="56" viewBox="0 0 56 56"><defs><radialGradient id="sph" cx="0.65" cy="0.35" r="0.75"><stop offset="0" stop-color="#118a11"/><stop offset="0.6" stop-color="#064a06"/><stop offset="1" stop-color="#021502"/></radialGradient></defs><circle cx="28" cy="28" r="27" fill="url(#sph)"/><circle cx="37" cy="17" r="2.5" fill="#55ff55"/><circle cx="28" cy="49" r="2" fill="#44ee44"/></svg><svg style="left:1336px;top:386px;" width="12" height="10" viewBox="0 0 12 10"><path d="M2 2.5l4 4 4-4" fill="none" stroke="#d8d8d8" stroke-width="1.5"/></svg><div style="left:1111px;top:424px;width:244px;height:21px;background:#3d4354;"></div><svg style="left:1161px;top:426px;" width="16" height="16" viewBox="0 0 16 16"><path d="M8 1l6.5 3.2v7.6L8 15l-6.5-3.2V4.2z" fill="#e0e0e0"/><path d="M8 7.5L14 4.5M8 7.5L2 4.5M8 7.5V15" stroke="#262c3b" stroke-width="1.4" fill="none"/></svg><span class="t" style="left:1182px;top:426px;color:#ccced3;letter-spacing:0.5px;font-weight:normal;">GeometryInstance</span><div style="left:1111px;top:445px;width:244px;height:66px;background:#313747;"></div><svg style="left:1114px;top:450px;" width="10" height="12" viewBox="0 0 10 12"><path d="M3 2l4 4-4 4" fill="none" stroke="#858992" stroke-width="1.6"/></svg><span class="t" style="left:1130px;top:448px;color:#ccced3;letter-spacing:0.5px;font-weight:normal;">Geometry</span><svg style="left:1114px;top:472px;" width="10" height="12" viewBox="0 0 10 12"><path d="M3 2l4 4-4 4" fill="none" stroke="#858992" stroke-width="1.6"/></svg><span class="t" style="left:1130px;top:470px;color:#ccced3;letter-spacing:0.5px;font-weight:normal;">Baked Light</span><svg style="left:1114px;top:494px;" width="10" height="12" viewBox="0 0 10 12"><path d="M3 2l4 4-4 4" fill="none" stroke="#858992" stroke-width="1.6"/></svg><span class="t" style="left:1130px;top:492px;color:#ccced3;letter-spacing:0.5px;font-weight:normal;">Lod</span><div style="left:1111px;top:511px;width:244px;height:22px;background:#3d4354;"></div><svg style="left:1174px;top:514px;" width="16" height="16" viewBox="0 0 16 16"><path d="M8 1l6.5 3.2v7.6L8 15l-6.5-3.2V4.2z" fill="#e0e0e0"/><path d="M8 7.5L14 4.5M8 7.5L2 4.5M8 7.5V15" stroke="#262c3b" stroke-width="1.4" fill="none"/></svg><span class="t" style="left:1195px;top:514px;color:#ccced3;letter-spacing:0.5px;font-weight:normal;">VisualInstance</span><span class="t" style="left:1112px;top:536px;color:#ccced3;letter-spacing:0.5px;font-weight:normal;">Layers</span><div style="left:1111px;top:555px;width:221px;height:32px;background:#1f2430;"></div><div style="left:1333px;top:555px;width:22px;height:32px;background:#262c3b;"></div><span class="t" style="left:1337px;top:565px;color:#ccced3;letter-spacing:0px;font-weight:normal;">...</span><div style="left:1115px;top:558px;width:14px;height:14px;background:#b9bbc1;"></div><div style="left:1130px;top:558px;width:14px;height:14px;background:#4d515c;"></div><div style="left:1145px;top:558px;width:14px;height:14px;background:#4d515c;"></div><div style="left:1160px;top:558px;width:14px;height:14px;background:#4d515c;"></div><div style="left:1175px;top:558px;width:14px;height:14px;background:#4d515c;"></div><div style="left:1191px;top:558px;width:14px;height:14px;background:#4d515c;"></div><div style="left:1206px;top:558px;width:14px;height:14px;background:#4d515c;"></div><div style="left:1221px;top:558px;width:14px;height:14px;background:#4d515c;"></div><div style="left:1236px;top:558px;width:14px;height:14px;background:#4d515c;"></div><div style="left:1251px;top:558px;width:14px;height:14px;background:#4d515c;"></div><div style="left:1115px;top:573px;width:14px;height:14px;background:#4d515c;"></div><div style="left:1130px;top:573px;width:14px;height:14px;background:#4d515c;"></div><div style="left:1145px;top:573px;width:14px;height:14px;background:#4d515c;"></div><div style="left:1160px;top:573px;width:14px;height:14px;background:#4d515c;"></div><div style="left:1175px;top:573px;width:14px;height:14px;background:#4d515c;"></div><div style="left:1191px;top:573px;width:14px;height:14px;background:#4d515c;"></div><div style="left:1206px;top:573px;width:14px;height:14px;background:#4d515c;"></div><div style="left:1221px;top:573px;width:14px;height:14px;background:#4d515c;"></div><div style="left:1236px;top:573px;width:14px;height:14px;background:#4d515c;"></div><div style="left:1251px;top:573px;width:14px;height:14px;background:#4d515c;"></div>
</body></html>
